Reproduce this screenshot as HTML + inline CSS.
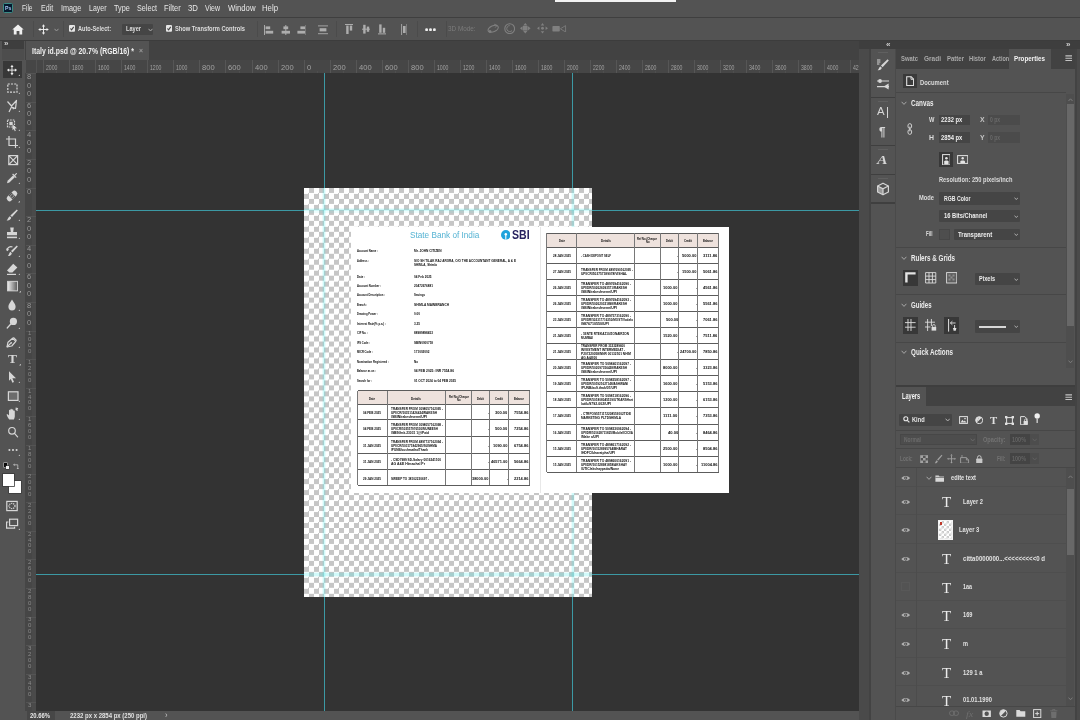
<!DOCTYPE html><html><head><meta charset="utf-8"><title>Photoshop</title><style>html,body{margin:0;padding:0;background:#535353;}body{width:1080px;height:720px;overflow:hidden;position:relative;font-family:"Liberation Sans", sans-serif;}#app{position:absolute;left:0;top:0;width:1080px;height:720px;overflow:hidden;will-change:transform;}.t{position:absolute;white-space:pre;line-height:1;transform-origin:0 50%;}</style></head><body><div id="app">
<div style="position:absolute;left:0px;top:0px;width:1080px;height:720px;background:#535353;"></div>
<div style="position:absolute;left:0px;top:17px;width:1080px;height:1px;background:#3f3f3f;"></div>
<div style="position:absolute;left:555px;top:0px;width:121px;height:2px;background:#f2f2f2;"></div>
<div style="position:absolute;left:0px;top:40px;width:1080px;height:1px;background:#3c3c3c;"></div>
<div style="position:absolute;left:25px;top:41px;width:835px;height:19px;background:#424242;"></div>
<div style="position:absolute;left:860px;top:41px;width:220px;height:679px;background:#4a4a4a;"></div>
<div style="position:absolute;left:860px;top:41px;width:220px;height:8px;background:#3e3e3e;"></div>
<div style="position:absolute;left:1075px;top:49px;width:1.6px;height:671px;background:#434343;"></div>
<div style="position:absolute;left:2.8px;top:2.8px;width:10.6px;height:9.8px;background:#061a2e;border:1.1px solid #3a8c86;border-radius:1.6px;box-sizing:border-box;"></div>
<span class="t" style="left:4.9px;top:6px;font-size:5.6px;font-weight:700;color:#a8c6f2;transform:translateY(0.01px) scale(0.9352,1.0);">Ps</span>
<span class="t" style="left:22px;top:4px;font-size:9px;font-weight:400;color:#e6e6e6;transform:translateY(0.11px) scale(0.7234,1.08);">File</span>
<span class="t" style="left:40.8px;top:4px;font-size:9px;font-weight:400;color:#e6e6e6;transform:translateY(0.11px) scale(0.7863,1.08);">Edit</span>
<span class="t" style="left:60.8px;top:4px;font-size:9px;font-weight:400;color:#e6e6e6;transform:translateY(0.11px) scale(0.8075,1.08);">Image</span>
<span class="t" style="left:89px;top:4px;font-size:9px;font-weight:400;color:#e6e6e6;transform:translateY(0.11px) scale(0.7772,1.08);">Layer</span>
<span class="t" style="left:113.8px;top:4px;font-size:9px;font-weight:400;color:#e6e6e6;transform:translateY(0.11px) scale(0.8045,1.08);">Type</span>
<span class="t" style="left:137px;top:4px;font-size:9px;font-weight:400;color:#e6e6e6;transform:translateY(0.11px) scale(0.7995,1.08);">Select</span>
<span class="t" style="left:163.8px;top:4px;font-size:9px;font-weight:400;color:#e6e6e6;transform:translateY(0.11px) scale(0.8350,1.08);">Filter</span>
<span class="t" style="left:187.5px;top:4px;font-size:9px;font-weight:400;color:#e6e6e6;transform:translateY(0.11px) scale(0.8684,1.08);">3D</span>
<span class="t" style="left:205px;top:4px;font-size:9px;font-weight:400;color:#e6e6e6;transform:translateY(0.11px) scale(0.7748,1.08);">View</span>
<span class="t" style="left:227.5px;top:4px;font-size:9px;font-weight:400;color:#e6e6e6;transform:translateY(0.11px) scale(0.8590,1.08);">Window</span>
<span class="t" style="left:262px;top:4px;font-size:9px;font-weight:400;color:#e6e6e6;transform:translateY(0.11px) scale(0.8641,1.08);">Help</span>
<svg style="position:absolute;left:12px;top:23.5px;" width="12" height="11" viewBox="0 0 12 11"><path d="M6 0.5 L0.3 5.6 H1.8 V10.5 H4.6 V7 H7.4 V10.5 H10.2 V5.6 H11.7 Z" fill="#f0f0f0"/></svg>
<div style="position:absolute;left:33px;top:21px;width:1px;height:16px;background:#4b4b4b;"></div>
<svg style="position:absolute;left:38px;top:23.5px;" width="11" height="11" viewBox="0 0 11 11"><g stroke="#eee" stroke-width="0.95" fill="#eee"><path d="M5.5 1.6V9.4M1.6 5.5H9.4" fill="none"/><path d="M5.5 0.2L7.1 2.5H3.9Z M5.5 10.8L7.1 8.5H3.9Z M0.2 5.5L2.5 3.9V7.1Z M10.8 5.5L8.5 3.9V7.1Z" stroke="none"/></g></svg>
<svg style="position:absolute;left:54px;top:27.5px;" width="5" height="4" viewBox="0 0 5 4"><path d="M0.5 0.8L2.5 3L4.5 0.8" stroke="#999" stroke-width="1" fill="none"/></svg>
<div style="position:absolute;left:63px;top:21px;width:1px;height:16px;background:#4b4b4b;"></div>
<svg style="position:absolute;left:69.1px;top:25.4px;" width="6" height="6.8" viewBox="0 0 6 6.8"><rect x="0" y="0" width="6" height="6.8" rx="1" fill="#e6e6e6"/><path d="M1.4 3.5L2.6 4.9L4.7 1.9" stroke="#444" stroke-width="1.1" fill="none"/></svg>
<span class="t" style="left:78px;top:24px;font-size:7.5px;font-weight:700;color:#dedede;transform:translateY(0.93px) scale(0.7471,1.08);">Auto-Select:</span>
<div style="position:absolute;left:122px;top:24px;width:31px;height:11px;background:#454545;border-radius:1px;"></div>
<span class="t" style="left:126.3px;top:25px;font-size:7.5px;font-weight:700;color:#dedede;transform:translateY(0.03px) scale(0.7494,1.08);">Layer</span>
<svg style="position:absolute;left:147.5px;top:27.5px;" width="5" height="4" viewBox="0 0 5 4"><path d="M0.5 0.8L2.5 3L4.5 0.8" stroke="#aaa" stroke-width="1" fill="none"/></svg>
<svg style="position:absolute;left:166.1px;top:25.4px;" width="6" height="6.8" viewBox="0 0 6 6.8"><rect x="0" y="0" width="6" height="6.8" rx="1" fill="#e6e6e6"/><path d="M1.4 3.5L2.6 4.9L4.7 1.9" stroke="#444" stroke-width="1.1" fill="none"/></svg>
<span class="t" style="left:175px;top:24px;font-size:7.5px;font-weight:700;color:#dedede;transform:translateY(0.93px) scale(0.7635,1.08);">Show Transform Controls</span>
<div style="position:absolute;left:257px;top:21px;width:1px;height:16px;background:#4b4b4b;"></div>
<div style="position:absolute;left:26px;top:41px;width:123px;height:19px;background:#535353;"></div>
<span class="t" style="left:32px;top:47px;font-size:8px;font-weight:700;color:#f0f0f0;transform:translateY(0.39px) scale(0.8608,1.08);">Italy id.psd @ 20.7% (RGB/16) *</span>
<span class="t" style="left:139px;top:46px;font-size:7px;font-weight:700;color:#9a9a9a;transform:translateY(0.83px) scale(0.9771,1.08);">×</span>
<div style="position:absolute;left:0px;top:41px;width:25px;height:679px;background:#535353;"></div>
<div style="position:absolute;left:2px;top:41px;width:22px;height:8px;background:#3e3e3e;"></div>
<span class="t" style="left:4px;top:40px;font-size:7px;font-weight:700;color:#cfcfcf;transform:translateY(0.13px) scale(1.1520,1.08);">»</span>
<div style="position:absolute;left:2px;top:49px;width:22px;height:11px;background:#4d4d4d;"></div>
<div style="position:absolute;left:2.6px;top:61.4px;width:19.6px;height:16.2px;background:#383838;"></div>
<div style="position:absolute;left:26px;top:59.6px;width:834px;height:13.2px;background:#464646;"></div>
<div style="position:absolute;left:25.4px;top:73px;width:10.8px;height:638px;background:#464646;"></div>
<div style="position:absolute;left:31.5px;top:73px;width:4.7px;height:638px;background:#4a4a4a;"></div>
<div style="position:absolute;left:36px;top:73px;width:823px;height:638px;background:#333333;"></div>
<div style="position:absolute;left:25px;top:711px;width:835px;height:9px;background:#535353;"></div>
<div style="position:absolute;left:27px;top:711px;width:28px;height:9px;background:#474747;"></div>
<span class="t" style="left:30px;top:711px;font-size:7px;font-weight:700;color:#e8e8e8;transform:translateY(0.53px) scale(0.8421,1.08);">20.66%</span>
<span class="t" style="left:70px;top:711px;font-size:7px;font-weight:700;color:#e0e0e0;transform:translateY(0.53px) scale(0.8566,1.08);">2232 px x 2854 px (250 ppi)</span>
<span class="t" style="left:165px;top:711px;font-size:8px;font-weight:400;color:#ccc;transform:translateY(0.71px) scale(0.9357,1.08);">›</span>
<div style="position:absolute;left:43px;top:60px;width:1px;height:13px;background:#565656;"></div>
<span class="t" style="left:46px;top:64px;font-size:6.5px;font-weight:400;color:#a2a2a2;transform:translateY(0.82px) scale(0.7948,1.08);">2000</span>
<div style="position:absolute;left:69px;top:60px;width:1px;height:13px;background:#565656;"></div>
<span class="t" style="left:72px;top:64px;font-size:6.5px;font-weight:400;color:#a2a2a2;transform:translateY(0.82px) scale(0.7948,1.08);">1800</span>
<div style="position:absolute;left:95px;top:60px;width:1px;height:13px;background:#565656;"></div>
<span class="t" style="left:98px;top:64px;font-size:6.5px;font-weight:400;color:#a2a2a2;transform:translateY(0.82px) scale(0.7948,1.08);">1600</span>
<div style="position:absolute;left:121px;top:60px;width:1px;height:13px;background:#565656;"></div>
<span class="t" style="left:124px;top:64px;font-size:6.5px;font-weight:400;color:#a2a2a2;transform:translateY(0.82px) scale(0.7948,1.08);">1400</span>
<div style="position:absolute;left:147px;top:60px;width:1px;height:13px;background:#565656;"></div>
<span class="t" style="left:150px;top:64px;font-size:6.5px;font-weight:400;color:#a2a2a2;transform:translateY(0.82px) scale(0.7948,1.08);">1200</span>
<div style="position:absolute;left:173px;top:60px;width:1px;height:13px;background:#565656;"></div>
<span class="t" style="left:176px;top:64px;font-size:6.5px;font-weight:400;color:#a2a2a2;transform:translateY(0.82px) scale(0.7948,1.08);">1000</span>
<div style="position:absolute;left:199px;top:60px;width:1px;height:13px;background:#565656;"></div>
<span class="t" style="left:202px;top:63px;font-size:7.5px;font-weight:400;color:#a2a2a2;transform:translateY(0.82px) scale(1.0067,1.08);">800</span>
<div style="position:absolute;left:225px;top:60px;width:1px;height:13px;background:#565656;"></div>
<span class="t" style="left:228px;top:63px;font-size:7.5px;font-weight:400;color:#a2a2a2;transform:translateY(0.82px) scale(1.0067,1.08);">600</span>
<div style="position:absolute;left:252px;top:60px;width:1px;height:13px;background:#565656;"></div>
<span class="t" style="left:255px;top:63px;font-size:7.5px;font-weight:400;color:#a2a2a2;transform:translateY(0.82px) scale(1.0067,1.08);">400</span>
<div style="position:absolute;left:278px;top:60px;width:1px;height:13px;background:#565656;"></div>
<span class="t" style="left:281px;top:63px;font-size:7.5px;font-weight:400;color:#a2a2a2;transform:translateY(0.82px) scale(1.0067,1.08);">200</span>
<div style="position:absolute;left:304px;top:60px;width:1px;height:13px;background:#565656;"></div>
<span class="t" style="left:307px;top:63px;font-size:7.5px;font-weight:400;color:#a2a2a2;transform:translateY(0.82px) scale(1.0067,1.08);">0</span>
<div style="position:absolute;left:330px;top:60px;width:1px;height:13px;background:#565656;"></div>
<span class="t" style="left:333px;top:63px;font-size:7.5px;font-weight:400;color:#a2a2a2;transform:translateY(0.82px) scale(1.0067,1.08);">200</span>
<div style="position:absolute;left:356px;top:60px;width:1px;height:13px;background:#565656;"></div>
<span class="t" style="left:359px;top:63px;font-size:7.5px;font-weight:400;color:#a2a2a2;transform:translateY(0.82px) scale(1.0067,1.08);">400</span>
<div style="position:absolute;left:382px;top:60px;width:1px;height:13px;background:#565656;"></div>
<span class="t" style="left:385px;top:63px;font-size:7.5px;font-weight:400;color:#a2a2a2;transform:translateY(0.82px) scale(1.0067,1.08);">600</span>
<div style="position:absolute;left:408px;top:60px;width:1px;height:13px;background:#565656;"></div>
<span class="t" style="left:411px;top:63px;font-size:7.5px;font-weight:400;color:#a2a2a2;transform:translateY(0.82px) scale(1.0067,1.08);">800</span>
<div style="position:absolute;left:434px;top:60px;width:1px;height:13px;background:#565656;"></div>
<span class="t" style="left:437px;top:64px;font-size:6.5px;font-weight:400;color:#a2a2a2;transform:translateY(0.82px) scale(0.7948,1.08);">1000</span>
<div style="position:absolute;left:460px;top:60px;width:1px;height:13px;background:#565656;"></div>
<span class="t" style="left:463px;top:64px;font-size:6.5px;font-weight:400;color:#a2a2a2;transform:translateY(0.82px) scale(0.7948,1.08);">1200</span>
<div style="position:absolute;left:486px;top:60px;width:1px;height:13px;background:#565656;"></div>
<span class="t" style="left:489px;top:64px;font-size:6.5px;font-weight:400;color:#a2a2a2;transform:translateY(0.82px) scale(0.7948,1.08);">1400</span>
<div style="position:absolute;left:512px;top:60px;width:1px;height:13px;background:#565656;"></div>
<span class="t" style="left:515px;top:64px;font-size:6.5px;font-weight:400;color:#a2a2a2;transform:translateY(0.82px) scale(0.7948,1.08);">1600</span>
<div style="position:absolute;left:538px;top:60px;width:1px;height:13px;background:#565656;"></div>
<span class="t" style="left:541px;top:64px;font-size:6.5px;font-weight:400;color:#a2a2a2;transform:translateY(0.82px) scale(0.7948,1.08);">1800</span>
<div style="position:absolute;left:564px;top:60px;width:1px;height:13px;background:#565656;"></div>
<span class="t" style="left:567px;top:64px;font-size:6.5px;font-weight:400;color:#a2a2a2;transform:translateY(0.82px) scale(0.7948,1.08);">2000</span>
<div style="position:absolute;left:590px;top:60px;width:1px;height:13px;background:#565656;"></div>
<span class="t" style="left:593px;top:64px;font-size:6.5px;font-weight:400;color:#a2a2a2;transform:translateY(0.82px) scale(0.7948,1.08);">2200</span>
<div style="position:absolute;left:616px;top:60px;width:1px;height:13px;background:#565656;"></div>
<span class="t" style="left:619px;top:64px;font-size:6.5px;font-weight:400;color:#a2a2a2;transform:translateY(0.82px) scale(0.7948,1.08);">2400</span>
<div style="position:absolute;left:642px;top:60px;width:1px;height:13px;background:#565656;"></div>
<span class="t" style="left:645px;top:64px;font-size:6.5px;font-weight:400;color:#a2a2a2;transform:translateY(0.82px) scale(0.7948,1.08);">2600</span>
<div style="position:absolute;left:668px;top:60px;width:1px;height:13px;background:#565656;"></div>
<span class="t" style="left:671px;top:64px;font-size:6.5px;font-weight:400;color:#a2a2a2;transform:translateY(0.82px) scale(0.7948,1.08);">2800</span>
<div style="position:absolute;left:694px;top:60px;width:1px;height:13px;background:#565656;"></div>
<span class="t" style="left:697px;top:64px;font-size:6.5px;font-weight:400;color:#a2a2a2;transform:translateY(0.82px) scale(0.7948,1.08);">3000</span>
<div style="position:absolute;left:720px;top:60px;width:1px;height:13px;background:#565656;"></div>
<span class="t" style="left:723px;top:64px;font-size:6.5px;font-weight:400;color:#a2a2a2;transform:translateY(0.82px) scale(0.7948,1.08);">3200</span>
<div style="position:absolute;left:746px;top:60px;width:1px;height:13px;background:#565656;"></div>
<span class="t" style="left:749px;top:64px;font-size:6.5px;font-weight:400;color:#a2a2a2;transform:translateY(0.82px) scale(0.7948,1.08);">3400</span>
<div style="position:absolute;left:772px;top:60px;width:1px;height:13px;background:#565656;"></div>
<span class="t" style="left:775px;top:64px;font-size:6.5px;font-weight:400;color:#a2a2a2;transform:translateY(0.82px) scale(0.7948,1.08);">3600</span>
<div style="position:absolute;left:798px;top:60px;width:1px;height:13px;background:#565656;"></div>
<span class="t" style="left:801px;top:64px;font-size:6.5px;font-weight:400;color:#a2a2a2;transform:translateY(0.82px) scale(0.7948,1.08);">3800</span>
<div style="position:absolute;left:824px;top:60px;width:1px;height:13px;background:#565656;"></div>
<span class="t" style="left:827px;top:64px;font-size:6.5px;font-weight:400;color:#a2a2a2;transform:translateY(0.82px) scale(0.7948,1.08);">4000</span>
<div style="position:absolute;left:850px;top:60px;width:1px;height:13px;background:#565656;"></div>
<span class="t" style="left:853px;top:64px;font-size:6.5px;font-weight:400;color:#a2a2a2;transform:translateY(0.82px) scale(0.7948,1.08);">4200</span>
<div style="position:absolute;left:56px;top:71px;width:1px;height:2px;background:#4e4e4e;"></div>
<div style="position:absolute;left:82px;top:71px;width:1px;height:2px;background:#4e4e4e;"></div>
<div style="position:absolute;left:108px;top:71px;width:1px;height:2px;background:#4e4e4e;"></div>
<div style="position:absolute;left:134px;top:71px;width:1px;height:2px;background:#4e4e4e;"></div>
<div style="position:absolute;left:160px;top:71px;width:1px;height:2px;background:#4e4e4e;"></div>
<div style="position:absolute;left:186px;top:71px;width:1px;height:2px;background:#4e4e4e;"></div>
<div style="position:absolute;left:212px;top:71px;width:1px;height:2px;background:#4e4e4e;"></div>
<div style="position:absolute;left:239px;top:71px;width:1px;height:2px;background:#4e4e4e;"></div>
<div style="position:absolute;left:265px;top:71px;width:1px;height:2px;background:#4e4e4e;"></div>
<div style="position:absolute;left:291px;top:71px;width:1px;height:2px;background:#4e4e4e;"></div>
<div style="position:absolute;left:317px;top:71px;width:1px;height:2px;background:#4e4e4e;"></div>
<div style="position:absolute;left:343px;top:71px;width:1px;height:2px;background:#4e4e4e;"></div>
<div style="position:absolute;left:369px;top:71px;width:1px;height:2px;background:#4e4e4e;"></div>
<div style="position:absolute;left:395px;top:71px;width:1px;height:2px;background:#4e4e4e;"></div>
<div style="position:absolute;left:421px;top:71px;width:1px;height:2px;background:#4e4e4e;"></div>
<div style="position:absolute;left:447px;top:71px;width:1px;height:2px;background:#4e4e4e;"></div>
<div style="position:absolute;left:473px;top:71px;width:1px;height:2px;background:#4e4e4e;"></div>
<div style="position:absolute;left:499px;top:71px;width:1px;height:2px;background:#4e4e4e;"></div>
<div style="position:absolute;left:525px;top:71px;width:1px;height:2px;background:#4e4e4e;"></div>
<div style="position:absolute;left:551px;top:71px;width:1px;height:2px;background:#4e4e4e;"></div>
<div style="position:absolute;left:577px;top:71px;width:1px;height:2px;background:#4e4e4e;"></div>
<div style="position:absolute;left:603px;top:71px;width:1px;height:2px;background:#4e4e4e;"></div>
<div style="position:absolute;left:629px;top:71px;width:1px;height:2px;background:#4e4e4e;"></div>
<div style="position:absolute;left:655px;top:71px;width:1px;height:2px;background:#4e4e4e;"></div>
<div style="position:absolute;left:681px;top:71px;width:1px;height:2px;background:#4e4e4e;"></div>
<div style="position:absolute;left:707px;top:71px;width:1px;height:2px;background:#4e4e4e;"></div>
<div style="position:absolute;left:733px;top:71px;width:1px;height:2px;background:#4e4e4e;"></div>
<div style="position:absolute;left:759px;top:71px;width:1px;height:2px;background:#4e4e4e;"></div>
<div style="position:absolute;left:785px;top:71px;width:1px;height:2px;background:#4e4e4e;"></div>
<div style="position:absolute;left:811px;top:71px;width:1px;height:2px;background:#4e4e4e;"></div>
<div style="position:absolute;left:837px;top:71px;width:1px;height:2px;background:#4e4e4e;"></div>
<div style="position:absolute;left:26px;top:73px;width:10px;height:1px;background:#545454;"></div>
<span class="t" style="left:27.3px;top:73px;font-size:7.5px;font-weight:400;color:#989898;transform:translateY(0.12px) scale(1.0067,1.08);">8</span>
<span class="t" style="left:27.3px;top:81px;font-size:7.5px;font-weight:400;color:#989898;transform:translateY(0.45px) scale(1.0067,1.08);">0</span>
<span class="t" style="left:27.3px;top:89px;font-size:7.5px;font-weight:400;color:#989898;transform:translateY(0.78px) scale(1.0067,1.08);">0</span>
<div style="position:absolute;left:26px;top:102px;width:10px;height:1px;background:#545454;"></div>
<span class="t" style="left:27.3px;top:101px;font-size:7.5px;font-weight:400;color:#989898;transform:translateY(0.72px) scale(1.0067,1.08);">6</span>
<span class="t" style="left:27.3px;top:110px;font-size:7.5px;font-weight:400;color:#989898;transform:translateY(0.05px) scale(1.0067,1.08);">0</span>
<span class="t" style="left:27.3px;top:118px;font-size:7.5px;font-weight:400;color:#989898;transform:translateY(0.38px) scale(1.0067,1.08);">0</span>
<div style="position:absolute;left:26px;top:130px;width:10px;height:1px;background:#545454;"></div>
<span class="t" style="left:27.3px;top:130px;font-size:7.5px;font-weight:400;color:#989898;transform:translateY(0.32px) scale(1.0067,1.08);">4</span>
<span class="t" style="left:27.3px;top:138px;font-size:7.5px;font-weight:400;color:#989898;transform:translateY(0.65px) scale(1.0067,1.08);">0</span>
<span class="t" style="left:27.3px;top:146px;font-size:7.5px;font-weight:400;color:#989898;transform:translateY(0.98px) scale(1.0067,1.08);">0</span>
<div style="position:absolute;left:26px;top:159px;width:10px;height:1px;background:#545454;"></div>
<span class="t" style="left:27.3px;top:158px;font-size:7.5px;font-weight:400;color:#989898;transform:translateY(0.92px) scale(1.0067,1.08);">2</span>
<span class="t" style="left:27.3px;top:167px;font-size:7.5px;font-weight:400;color:#989898;transform:translateY(0.25px) scale(1.0067,1.08);">0</span>
<span class="t" style="left:27.3px;top:175px;font-size:7.5px;font-weight:400;color:#989898;transform:translateY(0.58px) scale(1.0067,1.08);">0</span>
<div style="position:absolute;left:26px;top:188px;width:10px;height:1px;background:#545454;"></div>
<span class="t" style="left:27.3px;top:187px;font-size:7.5px;font-weight:400;color:#989898;transform:translateY(0.52px) scale(1.0067,1.08);">0</span>
<div style="position:absolute;left:26px;top:216px;width:10px;height:1px;background:#545454;"></div>
<span class="t" style="left:27.3px;top:216px;font-size:7.5px;font-weight:400;color:#989898;transform:translateY(0.12px) scale(1.0067,1.08);">2</span>
<span class="t" style="left:27.3px;top:224px;font-size:7.5px;font-weight:400;color:#989898;transform:translateY(0.45px) scale(1.0067,1.08);">0</span>
<span class="t" style="left:27.3px;top:232px;font-size:7.5px;font-weight:400;color:#989898;transform:translateY(0.78px) scale(1.0067,1.08);">0</span>
<div style="position:absolute;left:26px;top:245px;width:10px;height:1px;background:#545454;"></div>
<span class="t" style="left:27.3px;top:244px;font-size:7.5px;font-weight:400;color:#989898;transform:translateY(0.72px) scale(1.0067,1.08);">4</span>
<span class="t" style="left:27.3px;top:253px;font-size:7.5px;font-weight:400;color:#989898;transform:translateY(0.05px) scale(1.0067,1.08);">0</span>
<span class="t" style="left:27.3px;top:261px;font-size:7.5px;font-weight:400;color:#989898;transform:translateY(0.38px) scale(1.0067,1.08);">0</span>
<div style="position:absolute;left:26px;top:273px;width:10px;height:1px;background:#545454;"></div>
<span class="t" style="left:27.3px;top:273px;font-size:7.5px;font-weight:400;color:#989898;transform:translateY(0.32px) scale(1.0067,1.08);">6</span>
<span class="t" style="left:27.3px;top:281px;font-size:7.5px;font-weight:400;color:#989898;transform:translateY(0.65px) scale(1.0067,1.08);">0</span>
<span class="t" style="left:27.3px;top:289px;font-size:7.5px;font-weight:400;color:#989898;transform:translateY(0.98px) scale(1.0067,1.08);">0</span>
<div style="position:absolute;left:26px;top:302px;width:10px;height:1px;background:#545454;"></div>
<span class="t" style="left:27.3px;top:301px;font-size:7.5px;font-weight:400;color:#989898;transform:translateY(0.92px) scale(1.0067,1.08);">8</span>
<span class="t" style="left:27.3px;top:310px;font-size:7.5px;font-weight:400;color:#989898;transform:translateY(0.25px) scale(1.0067,1.08);">0</span>
<span class="t" style="left:27.3px;top:318px;font-size:7.5px;font-weight:400;color:#989898;transform:translateY(0.58px) scale(1.0067,1.08);">0</span>
<div style="position:absolute;left:26px;top:331px;width:10px;height:1px;background:#545454;"></div>
<span class="t" style="left:27.8px;top:331px;font-size:5.5px;font-weight:400;color:#8a8a8a;transform:translateY(0.35px) scale(1.1102,1.08);">1</span>
<span class="t" style="left:27.8px;top:337px;font-size:5.5px;font-weight:400;color:#8a8a8a;transform:translateY(0.25px) scale(1.1102,1.08);">0</span>
<span class="t" style="left:27.8px;top:343px;font-size:5.5px;font-weight:400;color:#8a8a8a;transform:translateY(0.15px) scale(1.1102,1.08);">0</span>
<span class="t" style="left:27.8px;top:349px;font-size:5.5px;font-weight:400;color:#8a8a8a;transform:translateY(0.05px) scale(1.1102,1.08);">0</span>
<div style="position:absolute;left:26px;top:359px;width:10px;height:1px;background:#545454;"></div>
<span class="t" style="left:27.8px;top:359px;font-size:5.5px;font-weight:400;color:#8a8a8a;transform:translateY(0.95px) scale(1.1102,1.08);">1</span>
<span class="t" style="left:27.8px;top:365px;font-size:5.5px;font-weight:400;color:#8a8a8a;transform:translateY(0.85px) scale(1.1102,1.08);">2</span>
<span class="t" style="left:27.8px;top:371px;font-size:5.5px;font-weight:400;color:#8a8a8a;transform:translateY(0.75px) scale(1.1102,1.08);">0</span>
<span class="t" style="left:27.8px;top:377px;font-size:5.5px;font-weight:400;color:#8a8a8a;transform:translateY(0.65px) scale(1.1102,1.08);">0</span>
<div style="position:absolute;left:26px;top:388px;width:10px;height:1px;background:#545454;"></div>
<span class="t" style="left:27.8px;top:388px;font-size:5.5px;font-weight:400;color:#8a8a8a;transform:translateY(0.55px) scale(1.1102,1.08);">1</span>
<span class="t" style="left:27.8px;top:394px;font-size:5.5px;font-weight:400;color:#8a8a8a;transform:translateY(0.45px) scale(1.1102,1.08);">4</span>
<span class="t" style="left:27.8px;top:400px;font-size:5.5px;font-weight:400;color:#8a8a8a;transform:translateY(0.35px) scale(1.1102,1.08);">0</span>
<span class="t" style="left:27.8px;top:406px;font-size:5.5px;font-weight:400;color:#8a8a8a;transform:translateY(0.25px) scale(1.1102,1.08);">0</span>
<div style="position:absolute;left:26px;top:416px;width:10px;height:1px;background:#545454;"></div>
<span class="t" style="left:27.8px;top:417px;font-size:5.5px;font-weight:400;color:#8a8a8a;transform:translateY(0.15px) scale(1.1102,1.08);">1</span>
<span class="t" style="left:27.8px;top:423px;font-size:5.5px;font-weight:400;color:#8a8a8a;transform:translateY(0.05px) scale(1.1102,1.08);">6</span>
<span class="t" style="left:27.8px;top:428px;font-size:5.5px;font-weight:400;color:#8a8a8a;transform:translateY(0.95px) scale(1.1102,1.08);">0</span>
<span class="t" style="left:27.8px;top:434px;font-size:5.5px;font-weight:400;color:#8a8a8a;transform:translateY(0.85px) scale(1.1102,1.08);">0</span>
<div style="position:absolute;left:26px;top:445px;width:10px;height:1px;background:#545454;"></div>
<span class="t" style="left:27.8px;top:445px;font-size:5.5px;font-weight:400;color:#8a8a8a;transform:translateY(0.75px) scale(1.1102,1.08);">1</span>
<span class="t" style="left:27.8px;top:451px;font-size:5.5px;font-weight:400;color:#8a8a8a;transform:translateY(0.65px) scale(1.1102,1.08);">8</span>
<span class="t" style="left:27.8px;top:457px;font-size:5.5px;font-weight:400;color:#8a8a8a;transform:translateY(0.55px) scale(1.1102,1.08);">0</span>
<span class="t" style="left:27.8px;top:463px;font-size:5.5px;font-weight:400;color:#8a8a8a;transform:translateY(0.45px) scale(1.1102,1.08);">0</span>
<div style="position:absolute;left:26px;top:474px;width:10px;height:1px;background:#545454;"></div>
<span class="t" style="left:27.8px;top:474px;font-size:5.5px;font-weight:400;color:#8a8a8a;transform:translateY(0.35px) scale(1.1102,1.08);">2</span>
<span class="t" style="left:27.8px;top:480px;font-size:5.5px;font-weight:400;color:#8a8a8a;transform:translateY(0.25px) scale(1.1102,1.08);">0</span>
<span class="t" style="left:27.8px;top:486px;font-size:5.5px;font-weight:400;color:#8a8a8a;transform:translateY(0.15px) scale(1.1102,1.08);">0</span>
<span class="t" style="left:27.8px;top:492px;font-size:5.5px;font-weight:400;color:#8a8a8a;transform:translateY(0.05px) scale(1.1102,1.08);">0</span>
<div style="position:absolute;left:26px;top:502px;width:10px;height:1px;background:#545454;"></div>
<span class="t" style="left:27.8px;top:502px;font-size:5.5px;font-weight:400;color:#8a8a8a;transform:translateY(0.95px) scale(1.1102,1.08);">2</span>
<span class="t" style="left:27.8px;top:508px;font-size:5.5px;font-weight:400;color:#8a8a8a;transform:translateY(0.85px) scale(1.1102,1.08);">2</span>
<span class="t" style="left:27.8px;top:514px;font-size:5.5px;font-weight:400;color:#8a8a8a;transform:translateY(0.75px) scale(1.1102,1.08);">0</span>
<span class="t" style="left:27.8px;top:520px;font-size:5.5px;font-weight:400;color:#8a8a8a;transform:translateY(0.65px) scale(1.1102,1.08);">0</span>
<div style="position:absolute;left:26px;top:531px;width:10px;height:1px;background:#545454;"></div>
<span class="t" style="left:27.8px;top:531px;font-size:5.5px;font-weight:400;color:#8a8a8a;transform:translateY(0.55px) scale(1.1102,1.08);">2</span>
<span class="t" style="left:27.8px;top:537px;font-size:5.5px;font-weight:400;color:#8a8a8a;transform:translateY(0.45px) scale(1.1102,1.08);">4</span>
<span class="t" style="left:27.8px;top:543px;font-size:5.5px;font-weight:400;color:#8a8a8a;transform:translateY(0.35px) scale(1.1102,1.08);">0</span>
<span class="t" style="left:27.8px;top:549px;font-size:5.5px;font-weight:400;color:#8a8a8a;transform:translateY(0.25px) scale(1.1102,1.08);">0</span>
<div style="position:absolute;left:26px;top:559px;width:10px;height:1px;background:#545454;"></div>
<span class="t" style="left:27.8px;top:560px;font-size:5.5px;font-weight:400;color:#8a8a8a;transform:translateY(0.15px) scale(1.1102,1.08);">2</span>
<span class="t" style="left:27.8px;top:566px;font-size:5.5px;font-weight:400;color:#8a8a8a;transform:translateY(0.05px) scale(1.1102,1.08);">6</span>
<span class="t" style="left:27.8px;top:571px;font-size:5.5px;font-weight:400;color:#8a8a8a;transform:translateY(0.95px) scale(1.1102,1.08);">0</span>
<span class="t" style="left:27.8px;top:577px;font-size:5.5px;font-weight:400;color:#8a8a8a;transform:translateY(0.85px) scale(1.1102,1.08);">0</span>
<div style="position:absolute;left:26px;top:588px;width:10px;height:1px;background:#545454;"></div>
<span class="t" style="left:27.8px;top:588px;font-size:5.5px;font-weight:400;color:#8a8a8a;transform:translateY(0.75px) scale(1.1102,1.08);">2</span>
<span class="t" style="left:27.8px;top:594px;font-size:5.5px;font-weight:400;color:#8a8a8a;transform:translateY(0.65px) scale(1.1102,1.08);">8</span>
<span class="t" style="left:27.8px;top:600px;font-size:5.5px;font-weight:400;color:#8a8a8a;transform:translateY(0.55px) scale(1.1102,1.08);">0</span>
<span class="t" style="left:27.8px;top:606px;font-size:5.5px;font-weight:400;color:#8a8a8a;transform:translateY(0.45px) scale(1.1102,1.08);">0</span>
<div style="position:absolute;left:26px;top:617px;width:10px;height:1px;background:#545454;"></div>
<span class="t" style="left:27.8px;top:617px;font-size:5.5px;font-weight:400;color:#8a8a8a;transform:translateY(0.35px) scale(1.1102,1.08);">3</span>
<span class="t" style="left:27.8px;top:623px;font-size:5.5px;font-weight:400;color:#8a8a8a;transform:translateY(0.25px) scale(1.1102,1.08);">0</span>
<span class="t" style="left:27.8px;top:629px;font-size:5.5px;font-weight:400;color:#8a8a8a;transform:translateY(0.15px) scale(1.1102,1.08);">0</span>
<span class="t" style="left:27.8px;top:635px;font-size:5.5px;font-weight:400;color:#8a8a8a;transform:translateY(0.05px) scale(1.1102,1.08);">0</span>
<div style="position:absolute;left:26px;top:645px;width:10px;height:1px;background:#545454;"></div>
<span class="t" style="left:27.8px;top:645px;font-size:5.5px;font-weight:400;color:#8a8a8a;transform:translateY(0.95px) scale(1.1102,1.08);">3</span>
<span class="t" style="left:27.8px;top:651px;font-size:5.5px;font-weight:400;color:#8a8a8a;transform:translateY(0.85px) scale(1.1102,1.08);">2</span>
<span class="t" style="left:27.8px;top:657px;font-size:5.5px;font-weight:400;color:#8a8a8a;transform:translateY(0.75px) scale(1.1102,1.08);">0</span>
<span class="t" style="left:27.8px;top:663px;font-size:5.5px;font-weight:400;color:#8a8a8a;transform:translateY(0.65px) scale(1.1102,1.08);">0</span>
<div style="position:absolute;left:26px;top:674px;width:10px;height:1px;background:#545454;"></div>
<span class="t" style="left:27.8px;top:674px;font-size:5.5px;font-weight:400;color:#8a8a8a;transform:translateY(0.55px) scale(1.1102,1.08);">3</span>
<span class="t" style="left:27.8px;top:680px;font-size:5.5px;font-weight:400;color:#8a8a8a;transform:translateY(0.45px) scale(1.1102,1.08);">4</span>
<span class="t" style="left:27.8px;top:686px;font-size:5.5px;font-weight:400;color:#8a8a8a;transform:translateY(0.35px) scale(1.1102,1.08);">0</span>
<span class="t" style="left:27.8px;top:692px;font-size:5.5px;font-weight:400;color:#8a8a8a;transform:translateY(0.25px) scale(1.1102,1.08);">0</span>
<div style="position:absolute;left:26px;top:702px;width:10px;height:1px;background:#545454;"></div>
<span class="t" style="left:27.8px;top:703px;font-size:5.5px;font-weight:400;color:#8a8a8a;transform:translateY(0.15px) scale(1.1102,1.08);">3</span>
<div style="position:absolute;left:26px;top:60px;width:10px;height:13px;background:#464646;"></div>
<div style="position:absolute;left:36px;top:60px;width:1px;height:13px;background:#525252;"></div>
<div style="position:absolute;left:323.7px;top:73px;width:1.2px;height:638px;background:rgba(64,192,208,0.72);"></div>
<div style="position:absolute;left:572.2px;top:73px;width:1.2px;height:638px;background:rgba(64,192,208,0.72);"></div>
<div style="position:absolute;left:36px;top:209.7px;width:824px;height:1.2px;background:rgba(64,192,208,0.72);"></div>
<div style="position:absolute;left:36px;top:573.9px;width:824px;height:1.2px;background:rgba(64,192,208,0.72);"></div>
<div style="position:absolute;left:303.8px;top:187.8px;width:288.6px;height:409.4px;overflow:hidden;background:#fff;"><div style="position:absolute;left:-10px;top:-10.98px;width:320px;height:440px;background:conic-gradient(#c6c6c6 25%,#fff 0 50%,#c6c6c6 0 75%,#fff 0);background-size:10px 10.98px;filter:blur(0.55px);"></div><div style="position:absolute;left:18.299999999999976px;top:0;width:4.4px;height:409.4px;background:rgba(60,235,235,0.09);"></div><div style="position:absolute;left:19.599999999999977px;top:0;width:1.8px;height:409.4px;background:rgba(60,235,235,0.16);"></div><div style="position:absolute;left:266.8px;top:0;width:4.4px;height:409.4px;background:rgba(60,235,235,0.09);"></div><div style="position:absolute;left:268.1px;top:0;width:1.8px;height:409.4px;background:rgba(60,235,235,0.16);"></div><div style="position:absolute;left:0;top:20.099999999999977px;width:288.6px;height:4.8px;background:rgba(60,235,235,0.09);"></div><div style="position:absolute;left:0;top:21.399999999999977px;width:288.6px;height:2.2px;background:rgba(60,235,235,0.16);"></div><div style="position:absolute;left:0;top:384.29999999999995px;width:288.6px;height:4.8px;background:rgba(60,235,235,0.09);"></div><div style="position:absolute;left:0;top:385.59999999999997px;width:288.6px;height:2.2px;background:rgba(60,235,235,0.16);"></div></div>
<div style="position:absolute;left:350.5px;top:227px;width:189.5px;height:265.6px;background:#ffffff;"></div>
<div style="position:absolute;left:540px;top:227.2px;width:189.2px;height:265.6px;background:#ffffff;"></div>
<div style="position:absolute;left:539.6px;top:227.2px;width:0.8px;height:265.4px;background:#e8e8e8;"></div>
<span class="t" style="left:410px;top:231px;font-size:8.2px;font-weight:400;color:#55b3d3;transform:translateY(0.51px) scale(1.0016,1.08);">State Bank of India</span>
<svg style="position:absolute;left:500.8px;top:230.4px;" width="9.6" height="9.8" viewBox="0 0 10 10"><circle cx="5" cy="5" r="5" fill="#1fa3dc"/><circle cx="5" cy="4.3" r="1.3" fill="#fff"/><rect x="4.45" y="4.5" width="1.1" height="5.5" fill="#fff"/></svg>
<span class="t" style="left:511.6px;top:230px;font-size:11.5px;font-weight:700;color:#27215f;transform:translateY(0.17px) scale(0.9180,1.08);">SBI</span>
<span class="t" style="left:357px;top:250px;font-size:3px;font-weight:700;color:#0c0c0c;transform:translateY(0.17px) scale(0.9193,1.08);">Account Name :</span>
<span class="t" style="left:414px;top:250px;font-size:3px;font-weight:700;color:#0c0c0c;transform:translateY(0.17px) scale(1.0571,1.08);">Mr. JOHN CITIZEN</span>
<span class="t" style="left:357px;top:260px;font-size:3px;font-weight:700;color:#0c0c0c;transform:translateY(0.07px) scale(0.8668,1.08);">Address :</span>
<span class="t" style="left:414px;top:260px;font-size:3px;font-weight:700;color:#0c0c0c;transform:translateY(0.07px) scale(1.0301,1.08);">S/O SH TILAK RAJ ARORA, O/O THE ACCOUNTANT GENERAL, A &amp; E</span>
<span class="t" style="left:414px;top:263px;font-size:3px;font-weight:700;color:#0c0c0c;transform:translateY(0.47px) scale(0.9993,1.08);">SHIMLA, Shimla</span>
<span class="t" style="left:357px;top:275px;font-size:3px;font-weight:700;color:#0c0c0c;transform:translateY(0.47px) scale(0.9588,1.08);">Date :</span>
<span class="t" style="left:414px;top:275px;font-size:3px;font-weight:700;color:#0c0c0c;transform:translateY(0.47px) scale(1.0343,1.08);">04 Feb 2025</span>
<span class="t" style="left:357px;top:284px;font-size:3px;font-weight:700;color:#0c0c0c;transform:translateY(0.67px) scale(0.9225,1.08);">Account Number :</span>
<span class="t" style="left:414px;top:284px;font-size:3px;font-weight:700;color:#0c0c0c;transform:translateY(0.67px) scale(1.0349,1.08);">20472676881</span>
<span class="t" style="left:357px;top:294px;font-size:3px;font-weight:700;color:#0c0c0c;transform:translateY(0.37px) scale(0.8982,1.08);">Account Description :</span>
<span class="t" style="left:414px;top:294px;font-size:3px;font-weight:700;color:#0c0c0c;transform:translateY(0.37px) scale(0.9552,1.08);">Savings</span>
<span class="t" style="left:357px;top:303px;font-size:3px;font-weight:700;color:#0c0c0c;transform:translateY(0.77px) scale(0.8216,1.08);">Branch :</span>
<span class="t" style="left:414px;top:303px;font-size:3px;font-weight:700;color:#0c0c0c;transform:translateY(0.77px) scale(1.0641,1.08);">SHIMLA MAINBRANCH</span>
<span class="t" style="left:357px;top:313px;font-size:3px;font-weight:700;color:#0c0c0c;transform:translateY(0.17px) scale(0.8930,1.08);">Drawing Power :</span>
<span class="t" style="left:414px;top:313px;font-size:3px;font-weight:700;color:#0c0c0c;transform:translateY(0.17px) scale(1.0267,1.08);">0.00</span>
<span class="t" style="left:357px;top:322px;font-size:3px;font-weight:700;color:#0c0c0c;transform:translateY(0.67px) scale(0.9450,1.08);">Interest Rate(% p.a.) :</span>
<span class="t" style="left:414px;top:322px;font-size:3px;font-weight:700;color:#0c0c0c;transform:translateY(0.67px) scale(1.0267,1.08);">3.25</span>
<span class="t" style="left:357px;top:332px;font-size:3px;font-weight:700;color:#0c0c0c;transform:translateY(0.07px) scale(0.8911,1.08);">CIF No. :</span>
<span class="t" style="left:414px;top:332px;font-size:3px;font-weight:700;color:#0c0c0c;transform:translateY(0.07px) scale(1.0349,1.08);">88989898453</span>
<span class="t" style="left:357px;top:341px;font-size:3px;font-weight:700;color:#0c0c0c;transform:translateY(0.77px) scale(0.8758,1.08);">IFS Code :</span>
<span class="t" style="left:414px;top:341px;font-size:3px;font-weight:700;color:#0c0c0c;transform:translateY(0.77px) scale(1.0075,1.08);">SBIN0000718</span>
<span class="t" style="left:357px;top:350px;font-size:3px;font-weight:700;color:#0c0c0c;transform:translateY(0.97px) scale(0.8967,1.08);">MICR Code :</span>
<span class="t" style="left:414px;top:350px;font-size:3px;font-weight:700;color:#0c0c0c;transform:translateY(0.97px) scale(1.0312,1.08);">171002002</span>
<span class="t" style="left:357px;top:360px;font-size:3px;font-weight:700;color:#0c0c0c;transform:translateY(0.47px) scale(0.9229,1.08);">Nomination Registered :</span>
<span class="t" style="left:414px;top:360px;font-size:3px;font-weight:700;color:#0c0c0c;transform:translateY(0.47px) scale(1.0000,1.08);">No</span>
<span class="t" style="left:357px;top:369px;font-size:3px;font-weight:700;color:#0c0c0c;transform:translateY(0.87px) scale(0.8630,1.08);">Balance as on :</span>
<span class="t" style="left:414px;top:369px;font-size:3px;font-weight:700;color:#0c0c0c;transform:translateY(0.87px) scale(1.1001,1.08);">04 FEB 2025: INR 7554.86</span>
<span class="t" style="left:357px;top:379px;font-size:3px;font-weight:700;color:#0c0c0c;transform:translateY(0.47px) scale(0.8997,1.08);">Search for :</span>
<span class="t" style="left:414px;top:379px;font-size:3px;font-weight:700;color:#0c0c0c;transform:translateY(0.47px) scale(1.0451,1.08);">01 OCT 2024 to 04 FEB 2025</span>
<div style="position:absolute;left:357.6px;top:390.7px;width:172.19999999999993px;height:13.300000000000011px;background:#eee2dd;"></div>
<div style="position:absolute;left:357.6px;top:390.3px;width:172.19999999999993px;height:0.8px;background:#5c5c5c;"></div>
<div style="position:absolute;left:357.6px;top:403.6px;width:172.19999999999993px;height:0.8px;background:#5c5c5c;"></div>
<div style="position:absolute;left:357.6px;top:419.40000000000003px;width:172.19999999999993px;height:0.8px;background:#5c5c5c;"></div>
<div style="position:absolute;left:357.6px;top:435.6px;width:172.19999999999993px;height:0.8px;background:#5c5c5c;"></div>
<div style="position:absolute;left:357.6px;top:452.6px;width:172.19999999999993px;height:0.8px;background:#5c5c5c;"></div>
<div style="position:absolute;left:357.6px;top:469.0px;width:172.19999999999993px;height:0.8px;background:#5c5c5c;"></div>
<div style="position:absolute;left:357.6px;top:484.8px;width:172.19999999999993px;height:0.8px;background:#5c5c5c;"></div>
<div style="position:absolute;left:357.25px;top:390.7px;width:0.7px;height:94.5px;background:#787878;"></div>
<div style="position:absolute;left:386.84999999999997px;top:390.7px;width:0.7px;height:94.5px;background:#787878;"></div>
<div style="position:absolute;left:445.15px;top:390.7px;width:0.7px;height:94.5px;background:#787878;"></div>
<div style="position:absolute;left:471.15px;top:390.7px;width:0.7px;height:94.5px;background:#787878;"></div>
<div style="position:absolute;left:489.25px;top:390.7px;width:0.7px;height:94.5px;background:#787878;"></div>
<div style="position:absolute;left:508.15px;top:390.7px;width:0.7px;height:94.5px;background:#787878;"></div>
<div style="position:absolute;left:529.4499999999999px;top:390.7px;width:0.7px;height:94.5px;background:#787878;"></div>
<span class="t" style="left:369.4px;top:397px;font-size:2.8px;font-weight:700;color:#0c0c0c;transform:translateY(0.52px) scale(0.9897,1.08);">Date</span>
<span class="t" style="left:411.35px;top:397px;font-size:2.8px;font-weight:700;color:#0c0c0c;transform:translateY(0.52px) scale(1.0903,1.08);">Details</span>
<span class="t" style="left:448.5px;top:396px;font-size:2.8px;font-weight:700;color:#0c0c0c;transform:translateY(0.02px) scale(0.9602,1.08);">Ref No./Cheque</span>
<span class="t" style="left:456.7px;top:399px;font-size:2.8px;font-weight:700;color:#0c0c0c;transform:translateY(0.12px) scale(0.9640,1.08);">No</span>
<span class="t" style="left:477.05px;top:397px;font-size:2.8px;font-weight:700;color:#0c0c0c;transform:translateY(0.52px) scale(1.0000,1.08);">Debit</span>
<span class="t" style="left:495.05px;top:397px;font-size:2.8px;font-weight:700;color:#0c0c0c;transform:translateY(0.52px) scale(0.9884,1.08);">Credit</span>
<span class="t" style="left:514.15px;top:397px;font-size:2.8px;font-weight:700;color:#0c0c0c;transform:translateY(0.52px) scale(0.9316,1.08);">Balance</span>
<span class="t" style="left:363.4px;top:412px;font-size:2.9px;font-weight:700;color:#0c0c0c;transform:translateY(0.08px) scale(1.0559,1.08);">04 FEB 2025</span>
<span class="t" style="left:391.2px;top:408px;font-size:2.9px;font-weight:700;color:#0c0c0c;transform:translateY(0.23px) scale(1.0715,1.08);">TRANSFER FROM 3098057162095 -</span>
<span class="t" style="left:391.2px;top:412px;font-size:2.9px;font-weight:700;color:#0c0c0c;transform:translateY(0.08px) scale(1.0760,1.08);">UPI/CR/503511426424/RAKESH</span>
<span class="t" style="left:391.2px;top:415px;font-size:2.9px;font-weight:700;color:#0c0c0c;transform:translateY(0.93px) scale(1.1852,1.08);">/SBIN/rakeshverm/UPI</span>
<span class="t" style="left:487.6px;top:412px;font-size:2.9px;font-weight:700;color:#0c0c0c;transform:translateY(0.08px) scale(1.0323,1.08);">-</span>
<span class="t" style="left:495.2px;top:412px;font-size:2.9px;font-weight:700;color:#0c0c0c;transform:translateY(0.08px) scale(1.3908,1.08);">300.00</span>
<span class="t" style="left:514.4499999999999px;top:412px;font-size:2.9px;font-weight:700;color:#0c0c0c;transform:translateY(0.08px) scale(1.3728,1.08);">7554.86</span>
<span class="t" style="left:363.4px;top:428px;font-size:2.9px;font-weight:700;color:#0c0c0c;transform:translateY(0.08px) scale(1.0559,1.08);">04 FEB 2025</span>
<span class="t" style="left:391.2px;top:424px;font-size:2.9px;font-weight:700;color:#0c0c0c;transform:translateY(0.23px) scale(1.0715,1.08);">TRANSFER FROM 3098057162098 -</span>
<span class="t" style="left:391.2px;top:428px;font-size:2.9px;font-weight:700;color:#0c0c0c;transform:translateY(0.08px) scale(1.0408,1.08);">UPI/CR/503557976530/MUNEESH</span>
<span class="t" style="left:391.2px;top:431px;font-size:2.9px;font-weight:700;color:#0c0c0c;transform:translateY(0.93px) scale(1.1285,1.08);">/SBIN/mk.23031 1@/Paid</span>
<span class="t" style="left:487.6px;top:428px;font-size:2.9px;font-weight:700;color:#0c0c0c;transform:translateY(0.08px) scale(1.0323,1.08);">-</span>
<span class="t" style="left:495.2px;top:428px;font-size:2.9px;font-weight:700;color:#0c0c0c;transform:translateY(0.08px) scale(1.3908,1.08);">500.00</span>
<span class="t" style="left:514.4499999999999px;top:428px;font-size:2.9px;font-weight:700;color:#0c0c0c;transform:translateY(0.08px) scale(1.3728,1.08);">7254.86</span>
<span class="t" style="left:363.4px;top:444px;font-size:2.9px;font-weight:700;color:#0c0c0c;transform:translateY(0.68px) scale(1.0559,1.08);">31 JAN 2025</span>
<span class="t" style="left:391.2px;top:440px;font-size:2.9px;font-weight:700;color:#0c0c0c;transform:translateY(0.83px) scale(1.0715,1.08);">TRANSFER FROM 4897737162094 -</span>
<span class="t" style="left:391.2px;top:444px;font-size:2.9px;font-weight:700;color:#0c0c0c;transform:translateY(0.68px) scale(1.0640,1.08);">UPI/CR/503171842965/SUSHMA</span>
<span class="t" style="left:391.2px;top:448px;font-size:2.9px;font-weight:700;color:#0c0c0c;transform:translateY(0.53px) scale(1.0764,1.08);">/PUNB/sushmatha/Thank</span>
<span class="t" style="left:487.6px;top:444px;font-size:2.9px;font-weight:700;color:#0c0c0c;transform:translateY(0.68px) scale(1.0323,1.08);">-</span>
<span class="t" style="left:493.15px;top:444px;font-size:2.9px;font-weight:700;color:#0c0c0c;transform:translateY(0.68px) scale(1.3728,1.08);">1090.00</span>
<span class="t" style="left:514.4499999999999px;top:444px;font-size:2.9px;font-weight:700;color:#0c0c0c;transform:translateY(0.68px) scale(1.3728,1.08);">6754.86</span>
<span class="t" style="left:363.4px;top:461px;font-size:2.9px;font-weight:700;color:#0c0c0c;transform:translateY(0.38px) scale(1.0559,1.08);">31 JAN 2025</span>
<span class="t" style="left:391.2px;top:459px;font-size:2.9px;font-weight:700;color:#0c0c0c;transform:translateY(0.45px) scale(1.0993,1.08);">- CSD7989 SD-Salary 0016241100</span>
<span class="t" style="left:391.2px;top:463px;font-size:2.9px;font-weight:700;color:#0c0c0c;transform:translateY(0.30px) scale(1.1865,1.08);">AG A&amp;E Himachal Pr</span>
<span class="t" style="left:487.6px;top:461px;font-size:2.9px;font-weight:700;color:#0c0c0c;transform:translateY(0.38px) scale(1.0323,1.08);">-</span>
<span class="t" style="left:491.1px;top:461px;font-size:2.9px;font-weight:700;color:#0c0c0c;transform:translateY(0.38px) scale(1.3596,1.08);">46571.00</span>
<span class="t" style="left:514.4499999999999px;top:461px;font-size:2.9px;font-weight:700;color:#0c0c0c;transform:translateY(0.38px) scale(1.3728,1.08);">5664.86</span>
<span class="t" style="left:363.4px;top:477px;font-size:2.9px;font-weight:700;color:#0c0c0c;transform:translateY(0.48px) scale(1.0559,1.08);">29 JAN 2025</span>
<span class="t" style="left:391.2px;top:477px;font-size:2.9px;font-weight:700;color:#0c0c0c;transform:translateY(0.48px) scale(1.0733,1.08);">SWEEP TO 38102230697 -</span>
<span class="t" style="left:472.20000000000005px;top:477px;font-size:2.9px;font-weight:700;color:#0c0c0c;transform:translateY(0.48px) scale(1.3596,1.08);">38000.00</span>
<span class="t" style="left:506.5px;top:477px;font-size:2.9px;font-weight:700;color:#0c0c0c;transform:translateY(0.48px) scale(1.0323,1.08);">-</span>
<span class="t" style="left:514.4499999999999px;top:477px;font-size:2.9px;font-weight:700;color:#0c0c0c;transform:translateY(0.48px) scale(1.3728,1.08);">2214.86</span>
<div style="position:absolute;left:546.5px;top:233px;width:172.29999999999995px;height:14px;background:#eee2dd;"></div>
<div style="position:absolute;left:546.5px;top:232.6px;width:172.29999999999995px;height:0.8px;background:#5c5c5c;"></div>
<div style="position:absolute;left:546.5px;top:246.6px;width:172.29999999999995px;height:0.8px;background:#5c5c5c;"></div>
<div style="position:absolute;left:546.5px;top:262.90000000000003px;width:172.29999999999995px;height:0.8px;background:#5c5c5c;"></div>
<div style="position:absolute;left:546.5px;top:279.0px;width:172.29999999999995px;height:0.8px;background:#5c5c5c;"></div>
<div style="position:absolute;left:546.5px;top:295.0px;width:172.29999999999995px;height:0.8px;background:#5c5c5c;"></div>
<div style="position:absolute;left:546.5px;top:310.90000000000003px;width:172.29999999999995px;height:0.8px;background:#5c5c5c;"></div>
<div style="position:absolute;left:546.5px;top:326.90000000000003px;width:172.29999999999995px;height:0.8px;background:#5c5c5c;"></div>
<div style="position:absolute;left:546.5px;top:342.90000000000003px;width:172.29999999999995px;height:0.8px;background:#5c5c5c;"></div>
<div style="position:absolute;left:546.5px;top:359.1px;width:172.29999999999995px;height:0.8px;background:#5c5c5c;"></div>
<div style="position:absolute;left:546.5px;top:375.0px;width:172.29999999999995px;height:0.8px;background:#5c5c5c;"></div>
<div style="position:absolute;left:546.5px;top:390.90000000000003px;width:172.29999999999995px;height:0.8px;background:#5c5c5c;"></div>
<div style="position:absolute;left:546.5px;top:407.20000000000005px;width:172.29999999999995px;height:0.8px;background:#5c5c5c;"></div>
<div style="position:absolute;left:546.5px;top:423.6px;width:172.29999999999995px;height:0.8px;background:#5c5c5c;"></div>
<div style="position:absolute;left:546.5px;top:439.8px;width:172.29999999999995px;height:0.8px;background:#5c5c5c;"></div>
<div style="position:absolute;left:546.5px;top:455.90000000000003px;width:172.29999999999995px;height:0.8px;background:#5c5c5c;"></div>
<div style="position:absolute;left:546.5px;top:471.90000000000003px;width:172.29999999999995px;height:0.8px;background:#5c5c5c;"></div>
<div style="position:absolute;left:546.15px;top:233px;width:0.7px;height:239.3px;background:#787878;"></div>
<div style="position:absolute;left:576.35px;top:233px;width:0.7px;height:239.3px;background:#787878;"></div>
<div style="position:absolute;left:634.25px;top:233px;width:0.7px;height:239.3px;background:#787878;"></div>
<div style="position:absolute;left:659.65px;top:233px;width:0.7px;height:239.3px;background:#787878;"></div>
<div style="position:absolute;left:678.4499999999999px;top:233px;width:0.7px;height:239.3px;background:#787878;"></div>
<div style="position:absolute;left:697.15px;top:233px;width:0.7px;height:239.3px;background:#787878;"></div>
<div style="position:absolute;left:718.4499999999999px;top:233px;width:0.7px;height:239.3px;background:#787878;"></div>
<span class="t" style="left:558.6px;top:239px;font-size:2.8px;font-weight:700;color:#0c0c0c;transform:translateY(0.57px) scale(0.9897,1.08);">Date</span>
<span class="t" style="left:600.6500000000001px;top:239px;font-size:2.8px;font-weight:700;color:#0c0c0c;transform:translateY(0.57px) scale(1.0903,1.08);">Details</span>
<span class="t" style="left:637.3px;top:238px;font-size:2.8px;font-weight:700;color:#0c0c0c;transform:translateY(0.07px) scale(0.9602,1.08);">Ref No./Cheque</span>
<span class="t" style="left:645.5px;top:241px;font-size:2.8px;font-weight:700;color:#0c0c0c;transform:translateY(0.17px) scale(0.9640,1.08);">No</span>
<span class="t" style="left:665.9px;top:239px;font-size:2.8px;font-weight:700;color:#0c0c0c;transform:translateY(0.57px) scale(1.0000,1.08);">Debit</span>
<span class="t" style="left:684.15px;top:239px;font-size:2.8px;font-weight:700;color:#0c0c0c;transform:translateY(0.57px) scale(0.9884,1.08);">Credit</span>
<span class="t" style="left:703.15px;top:239px;font-size:2.8px;font-weight:700;color:#0c0c0c;transform:translateY(0.57px) scale(0.9316,1.08);">Balance</span>
<span class="t" style="left:552.6px;top:254px;font-size:2.9px;font-weight:700;color:#0c0c0c;transform:translateY(0.73px) scale(1.0559,1.08);">28 JAN 2025</span>
<span class="t" style="left:580.7px;top:254px;font-size:2.9px;font-weight:700;color:#0c0c0c;transform:translateY(0.73px) scale(0.9481,1.08);">- CASH DEPOSIT SELF</span>
<span class="t" style="left:676.8px;top:254px;font-size:2.9px;font-weight:700;color:#0c0c0c;transform:translateY(0.73px) scale(1.0323,1.08);">-</span>
<span class="t" style="left:682.15px;top:254px;font-size:2.9px;font-weight:700;color:#0c0c0c;transform:translateY(0.73px) scale(1.3728,1.08);">5000.00</span>
<span class="t" style="left:703.4499999999999px;top:254px;font-size:2.9px;font-weight:700;color:#0c0c0c;transform:translateY(0.73px) scale(1.4151,1.08);">3111.86</span>
<span class="t" style="left:552.6px;top:270px;font-size:2.9px;font-weight:700;color:#0c0c0c;transform:translateY(0.93px) scale(1.0559,1.08);">27 JAN 2025</span>
<span class="t" style="left:580.7px;top:269px;font-size:2.9px;font-weight:700;color:#0c0c0c;transform:translateY(0.00px) scale(1.0715,1.08);">TRANSFER FROM 4897690162095 -</span>
<span class="t" style="left:580.7px;top:272px;font-size:2.9px;font-weight:700;color:#0c0c0c;transform:translateY(0.85px) scale(1.1139,1.08);">UPI/CR/502757189078/VISHAL</span>
<span class="t" style="left:676.8px;top:270px;font-size:2.9px;font-weight:700;color:#0c0c0c;transform:translateY(0.93px) scale(1.0323,1.08);">-</span>
<span class="t" style="left:682.15px;top:270px;font-size:2.9px;font-weight:700;color:#0c0c0c;transform:translateY(0.93px) scale(1.3728,1.08);">1500.00</span>
<span class="t" style="left:703.4499999999999px;top:270px;font-size:2.9px;font-weight:700;color:#0c0c0c;transform:translateY(0.93px) scale(1.3728,1.08);">5061.86</span>
<span class="t" style="left:552.6px;top:286px;font-size:2.9px;font-weight:700;color:#0c0c0c;transform:translateY(0.98px) scale(1.0559,1.08);">26 JAN 2025</span>
<span class="t" style="left:580.7px;top:283px;font-size:2.9px;font-weight:700;color:#0c0c0c;transform:translateY(0.13px) scale(1.1368,1.08);">TRANSFER TO 4897694162090 -</span>
<span class="t" style="left:580.7px;top:286px;font-size:2.9px;font-weight:700;color:#0c0c0c;transform:translateY(0.98px) scale(1.0721,1.08);">UPI/DR/502626093571/RAKESH</span>
<span class="t" style="left:580.7px;top:290px;font-size:2.9px;font-weight:700;color:#0c0c0c;transform:translateY(0.83px) scale(1.1852,1.08);">/SBIN/rakeshverm/UPI</span>
<span class="t" style="left:663.4499999999999px;top:286px;font-size:2.9px;font-weight:700;color:#0c0c0c;transform:translateY(0.98px) scale(1.3728,1.08);">1000.00</span>
<span class="t" style="left:695.5px;top:286px;font-size:2.9px;font-weight:700;color:#0c0c0c;transform:translateY(0.98px) scale(1.0323,1.08);">-</span>
<span class="t" style="left:703.4499999999999px;top:286px;font-size:2.9px;font-weight:700;color:#0c0c0c;transform:translateY(0.98px) scale(1.3728,1.08);">4561.86</span>
<span class="t" style="left:552.6px;top:302px;font-size:2.9px;font-weight:700;color:#0c0c0c;transform:translateY(0.93px) scale(1.0559,1.08);">26 JAN 2025</span>
<span class="t" style="left:580.7px;top:299px;font-size:2.9px;font-weight:700;color:#0c0c0c;transform:translateY(0.08px) scale(1.1368,1.08);">TRANSFER TO 4897694162093 -</span>
<span class="t" style="left:580.7px;top:302px;font-size:2.9px;font-weight:700;color:#0c0c0c;transform:translateY(0.93px) scale(1.0721,1.08);">UPI/DR/502620321898/RAKESH</span>
<span class="t" style="left:580.7px;top:306px;font-size:2.9px;font-weight:700;color:#0c0c0c;transform:translateY(0.78px) scale(1.1852,1.08);">/SBIN/rakeshverm/UPI</span>
<span class="t" style="left:663.4499999999999px;top:302px;font-size:2.9px;font-weight:700;color:#0c0c0c;transform:translateY(0.93px) scale(1.3728,1.08);">1000.00</span>
<span class="t" style="left:695.5px;top:302px;font-size:2.9px;font-weight:700;color:#0c0c0c;transform:translateY(0.93px) scale(1.0323,1.08);">-</span>
<span class="t" style="left:703.4499999999999px;top:302px;font-size:2.9px;font-weight:700;color:#0c0c0c;transform:translateY(0.93px) scale(1.3728,1.08);">5561.86</span>
<span class="t" style="left:552.6px;top:318px;font-size:2.9px;font-weight:700;color:#0c0c0c;transform:translateY(0.88px) scale(1.0559,1.08);">23 JAN 2025</span>
<span class="t" style="left:580.7px;top:315px;font-size:2.9px;font-weight:700;color:#0c0c0c;transform:translateY(0.03px) scale(1.1368,1.08);">TRANSFER TO 4897573162090 -</span>
<span class="t" style="left:580.7px;top:318px;font-size:2.9px;font-weight:700;color:#0c0c0c;transform:translateY(0.88px) scale(1.0518,1.08);">UPI/DR/502317716350/MOST/Vodafo</span>
<span class="t" style="left:580.7px;top:322px;font-size:2.9px;font-weight:700;color:#0c0c0c;transform:translateY(0.73px) scale(1.2436,1.08);">/9876710550/UPI</span>
<span class="t" style="left:665.5px;top:318px;font-size:2.9px;font-weight:700;color:#0c0c0c;transform:translateY(0.88px) scale(1.3908,1.08);">500.00</span>
<span class="t" style="left:695.5px;top:318px;font-size:2.9px;font-weight:700;color:#0c0c0c;transform:translateY(0.88px) scale(1.0323,1.08);">-</span>
<span class="t" style="left:703.4499999999999px;top:318px;font-size:2.9px;font-weight:700;color:#0c0c0c;transform:translateY(0.88px) scale(1.3728,1.08);">7061.86</span>
<span class="t" style="left:552.6px;top:334px;font-size:2.9px;font-weight:700;color:#0c0c0c;transform:translateY(0.88px) scale(1.0559,1.08);">21 JAN 2025</span>
<span class="t" style="left:580.7px;top:332px;font-size:2.9px;font-weight:700;color:#0c0c0c;transform:translateY(0.95px) scale(1.0711,1.08);">- 1ENTE RTEKAZ10/ZONAIRZON</span>
<span class="t" style="left:580.7px;top:336px;font-size:2.9px;font-weight:700;color:#0c0c0c;transform:translateY(0.80px) scale(1.0092,1.08);">MUMBAI</span>
<span class="t" style="left:663.4499999999999px;top:334px;font-size:2.9px;font-weight:700;color:#0c0c0c;transform:translateY(0.88px) scale(1.3728,1.08);">1520.00</span>
<span class="t" style="left:695.5px;top:334px;font-size:2.9px;font-weight:700;color:#0c0c0c;transform:translateY(0.88px) scale(1.0323,1.08);">-</span>
<span class="t" style="left:703.4499999999999px;top:334px;font-size:2.9px;font-weight:700;color:#0c0c0c;transform:translateY(0.88px) scale(1.3936,1.08);">7511.86</span>
<span class="t" style="left:552.6px;top:350px;font-size:2.9px;font-weight:700;color:#0c0c0c;transform:translateY(0.98px) scale(1.0559,1.08);">21 JAN 2025</span>
<span class="t" style="left:580.7px;top:345px;font-size:2.9px;font-weight:700;color:#0c0c0c;transform:translateY(0.20px) scale(1.0492,1.08);">TRANSFER FROM 3323289600</span>
<span class="t" style="left:580.7px;top:349px;font-size:2.9px;font-weight:700;color:#0c0c0c;transform:translateY(0.05px) scale(1.0798,1.08);">INVESTMENT INTERMEDIAT -</span>
<span class="t" style="left:580.7px;top:352px;font-size:2.9px;font-weight:700;color:#0c0c0c;transform:translateY(0.90px) scale(1.1031,1.08);">P207220058/NNR 00132501 NHIM</span>
<span class="t" style="left:580.7px;top:356px;font-size:2.9px;font-weight:700;color:#0c0c0c;transform:translateY(0.75px) scale(1.1143,1.08);">AG A&amp;E00</span>
<span class="t" style="left:676.8px;top:350px;font-size:2.9px;font-weight:700;color:#0c0c0c;transform:translateY(0.98px) scale(1.0323,1.08);">-</span>
<span class="t" style="left:680.1px;top:350px;font-size:2.9px;font-weight:700;color:#0c0c0c;transform:translateY(0.98px) scale(1.3596,1.08);">24700.00</span>
<span class="t" style="left:703.4499999999999px;top:350px;font-size:2.9px;font-weight:700;color:#0c0c0c;transform:translateY(0.98px) scale(1.3728,1.08);">7850.86</span>
<span class="t" style="left:552.6px;top:367px;font-size:2.9px;font-weight:700;color:#0c0c0c;transform:translateY(0.03px) scale(1.0559,1.08);">20 JAN 2025</span>
<span class="t" style="left:580.7px;top:363px;font-size:2.9px;font-weight:700;color:#0c0c0c;transform:translateY(0.18px) scale(1.1412,1.08);">TRANSFER TO 5098401162097 -</span>
<span class="t" style="left:580.7px;top:367px;font-size:2.9px;font-weight:700;color:#0c0c0c;transform:translateY(0.03px) scale(1.0721,1.08);">UPI/DR/502097356428/RAKESH</span>
<span class="t" style="left:580.7px;top:370px;font-size:2.9px;font-weight:700;color:#0c0c0c;transform:translateY(0.88px) scale(1.1852,1.08);">/SBIN/rakeshverm/UPI</span>
<span class="t" style="left:663.4499999999999px;top:367px;font-size:2.9px;font-weight:700;color:#0c0c0c;transform:translateY(0.03px) scale(1.3728,1.08);">8000.00</span>
<span class="t" style="left:695.5px;top:367px;font-size:2.9px;font-weight:700;color:#0c0c0c;transform:translateY(0.03px) scale(1.0323,1.08);">-</span>
<span class="t" style="left:703.4499999999999px;top:367px;font-size:2.9px;font-weight:700;color:#0c0c0c;transform:translateY(0.03px) scale(1.3728,1.08);">3323.86</span>
<span class="t" style="left:552.6px;top:382px;font-size:2.9px;font-weight:700;color:#0c0c0c;transform:translateY(0.93px) scale(1.0559,1.08);">19 JAN 2025</span>
<span class="t" style="left:580.7px;top:379px;font-size:2.9px;font-weight:700;color:#0c0c0c;transform:translateY(0.08px) scale(1.1368,1.08);">TRANSFER TO 5098358162097 -</span>
<span class="t" style="left:580.7px;top:382px;font-size:2.9px;font-weight:700;color:#0c0c0c;transform:translateY(0.93px) scale(1.0595,1.08);">UPI/DR/501921627148/ASHWANI</span>
<span class="t" style="left:580.7px;top:386px;font-size:2.9px;font-weight:700;color:#0c0c0c;transform:translateY(0.78px) scale(1.1607,1.08);">/PUNB/ac9.thak/07/UPI</span>
<span class="t" style="left:663.4499999999999px;top:382px;font-size:2.9px;font-weight:700;color:#0c0c0c;transform:translateY(0.93px) scale(1.3728,1.08);">1600.00</span>
<span class="t" style="left:695.5px;top:382px;font-size:2.9px;font-weight:700;color:#0c0c0c;transform:translateY(0.93px) scale(1.0323,1.08);">-</span>
<span class="t" style="left:703.4499999999999px;top:382px;font-size:2.9px;font-weight:700;color:#0c0c0c;transform:translateY(0.93px) scale(1.3728,1.08);">5153.86</span>
<span class="t" style="left:552.6px;top:399px;font-size:2.9px;font-weight:700;color:#0c0c0c;transform:translateY(0.03px) scale(1.0559,1.08);">18 JAN 2025</span>
<span class="t" style="left:580.7px;top:395px;font-size:2.9px;font-weight:700;color:#0c0c0c;transform:translateY(0.18px) scale(1.1412,1.08);">TRANSFER TO 5098118162096 -</span>
<span class="t" style="left:580.7px;top:399px;font-size:2.9px;font-weight:700;color:#0c0c0c;transform:translateY(0.03px) scale(1.0715,1.08);">UPI/DR/501808045519/UTKARSHart</span>
<span class="t" style="left:580.7px;top:402px;font-size:2.9px;font-weight:700;color:#0c0c0c;transform:translateY(0.88px) scale(1.2121,1.08);">/utib/9792-002/UPI</span>
<span class="t" style="left:663.4499999999999px;top:399px;font-size:2.9px;font-weight:700;color:#0c0c0c;transform:translateY(0.03px) scale(1.3728,1.08);">1200.00</span>
<span class="t" style="left:695.5px;top:399px;font-size:2.9px;font-weight:700;color:#0c0c0c;transform:translateY(0.03px) scale(1.0323,1.08);">-</span>
<span class="t" style="left:703.4499999999999px;top:399px;font-size:2.9px;font-weight:700;color:#0c0c0c;transform:translateY(0.03px) scale(1.3728,1.08);">6153.86</span>
<span class="t" style="left:552.6px;top:415px;font-size:2.9px;font-weight:700;color:#0c0c0c;transform:translateY(0.38px) scale(1.0559,1.08);">17 JAN 2025</span>
<span class="t" style="left:580.7px;top:413px;font-size:2.9px;font-weight:700;color:#0c0c0c;transform:translateY(0.45px) scale(1.0877,1.08);">- CTRPOS5571172208559102TIDE</span>
<span class="t" style="left:580.7px;top:417px;font-size:2.9px;font-weight:700;color:#0c0c0c;transform:translateY(0.30px) scale(1.0894,1.08);">MARKETING PLTDSHIMLA</span>
<span class="t" style="left:663.4499999999999px;top:415px;font-size:2.9px;font-weight:700;color:#0c0c0c;transform:translateY(0.38px) scale(1.4372,1.08);">1111.00</span>
<span class="t" style="left:695.5px;top:415px;font-size:2.9px;font-weight:700;color:#0c0c0c;transform:translateY(0.38px) scale(1.0323,1.08);">-</span>
<span class="t" style="left:703.4499999999999px;top:415px;font-size:2.9px;font-weight:700;color:#0c0c0c;transform:translateY(0.38px) scale(1.3728,1.08);">7353.86</span>
<span class="t" style="left:552.6px;top:431px;font-size:2.9px;font-weight:700;color:#0c0c0c;transform:translateY(0.68px) scale(1.0559,1.08);">16 JAN 2025</span>
<span class="t" style="left:580.7px;top:427px;font-size:2.9px;font-weight:700;color:#0c0c0c;transform:translateY(0.83px) scale(1.1368,1.08);">TRANSFER TO 5098330062094 -</span>
<span class="t" style="left:580.7px;top:431px;font-size:2.9px;font-weight:700;color:#0c0c0c;transform:translateY(0.68px) scale(1.0371,1.08);">UPI/DR/501628731825/Mobile/ICICI/A</span>
<span class="t" style="left:580.7px;top:435px;font-size:2.9px;font-weight:700;color:#0c0c0c;transform:translateY(0.53px) scale(1.1195,1.08);">/Make a/UPI</span>
<span class="t" style="left:667.55px;top:431px;font-size:2.9px;font-weight:700;color:#0c0c0c;transform:translateY(0.68px) scale(1.4168,1.08);">40.00</span>
<span class="t" style="left:695.5px;top:431px;font-size:2.9px;font-weight:700;color:#0c0c0c;transform:translateY(0.68px) scale(1.0323,1.08);">-</span>
<span class="t" style="left:703.4499999999999px;top:431px;font-size:2.9px;font-weight:700;color:#0c0c0c;transform:translateY(0.68px) scale(1.3728,1.08);">8464.86</span>
<span class="t" style="left:552.6px;top:447px;font-size:2.9px;font-weight:700;color:#0c0c0c;transform:translateY(0.83px) scale(1.0559,1.08);">15 JAN 2025</span>
<span class="t" style="left:580.7px;top:443px;font-size:2.9px;font-weight:700;color:#0c0c0c;transform:translateY(0.98px) scale(1.1368,1.08);">TRANSFER TO 4898617162092 -</span>
<span class="t" style="left:580.7px;top:447px;font-size:2.9px;font-weight:700;color:#0c0c0c;transform:translateY(0.83px) scale(1.0776,1.08);">UPI/DR/501528995764/BHARAT</span>
<span class="t" style="left:580.7px;top:451px;font-size:2.9px;font-weight:700;color:#0c0c0c;transform:translateY(0.68px) scale(1.1630,1.08);">/HDFC/bharatpha/UPI</span>
<span class="t" style="left:663.4499999999999px;top:447px;font-size:2.9px;font-weight:700;color:#0c0c0c;transform:translateY(0.83px) scale(1.3728,1.08);">2500.00</span>
<span class="t" style="left:695.5px;top:447px;font-size:2.9px;font-weight:700;color:#0c0c0c;transform:translateY(0.83px) scale(1.0323,1.08);">-</span>
<span class="t" style="left:703.4499999999999px;top:447px;font-size:2.9px;font-weight:700;color:#0c0c0c;transform:translateY(0.83px) scale(1.3728,1.08);">8504.86</span>
<span class="t" style="left:552.6px;top:463px;font-size:2.9px;font-weight:700;color:#0c0c0c;transform:translateY(0.88px) scale(1.0559,1.08);">15 JAN 2025</span>
<span class="t" style="left:580.7px;top:460px;font-size:2.9px;font-weight:700;color:#0c0c0c;transform:translateY(0.03px) scale(1.1368,1.08);">TRANSFER TO 4898600162091 -</span>
<span class="t" style="left:580.7px;top:463px;font-size:2.9px;font-weight:700;color:#0c0c0c;transform:translateY(0.88px) scale(1.0788,1.08);">UPI/DR/501528981858/AKSHAY</span>
<span class="t" style="left:580.7px;top:467px;font-size:2.9px;font-weight:700;color:#0c0c0c;transform:translateY(0.73px) scale(1.1483,1.08);">/UTIC/akshaypatta/None</span>
<span class="t" style="left:663.4499999999999px;top:463px;font-size:2.9px;font-weight:700;color:#0c0c0c;transform:translateY(0.88px) scale(1.3728,1.08);">1000.00</span>
<span class="t" style="left:695.5px;top:463px;font-size:2.9px;font-weight:700;color:#0c0c0c;transform:translateY(0.88px) scale(1.0323,1.08);">-</span>
<span class="t" style="left:701.4px;top:463px;font-size:2.9px;font-weight:700;color:#0c0c0c;transform:translateY(0.88px) scale(1.3774,1.08);">11004.86</span>
<svg style="position:absolute;left:5.300000000000001px;top:62.900000000000006px;" width="14" height="14" viewBox="0 0 14 14"><g transform="translate(1.7,1.6) scale(0.96,1)"><g stroke="#eee" stroke-width="0.95" fill="#eee"><path d="M5.5 1.6V9.4M1.6 5.5H9.4" fill="none"/><path d="M5.5 0.2L7.1 2.5H3.9Z M5.5 10.8L7.1 8.5H3.9Z M0.2 5.5L2.5 3.9V7.1Z M10.8 5.5L8.5 3.9V7.1Z" stroke="none"/></g></g></svg>
<svg style="position:absolute;left:17.6px;top:73.9px;" width="2.4" height="2.4" viewBox="0 0 2.4 2.4"><path d="M2.4 0V2.4H0Z" fill="#bdbdbd"/></svg>
<svg style="position:absolute;left:5.300000000000001px;top:80.5px;" width="14" height="14" viewBox="0 0 14 14"><rect x="2.8" y="3" width="9.2" height="8.2" stroke="#d6d6d6" fill="none" stroke-width="1.2" stroke-width="1.1" stroke-dasharray="2 1.2"/></svg>
<svg style="position:absolute;left:17.6px;top:91.5px;" width="2.4" height="2.4" viewBox="0 0 2.4 2.4"><path d="M2.4 0V2.4H0Z" fill="#bdbdbd"/></svg>
<svg style="position:absolute;left:5.300000000000001px;top:98.5px;" width="14" height="14" viewBox="0 0 14 14"><path d="M2.5 2.5L6.5 7L11.5 1.5L10.5 9.5L6.5 8L4 13" stroke="#d6d6d6" fill="none" stroke-width="1.2" stroke-linejoin="round"/><path d="M6.5 7.5L10 9.5L8 10.5Z" fill="#d6d6d6"/></svg>
<svg style="position:absolute;left:17.6px;top:109.5px;" width="2.4" height="2.4" viewBox="0 0 2.4 2.4"><path d="M2.4 0V2.4H0Z" fill="#bdbdbd"/></svg>
<svg style="position:absolute;left:5.300000000000001px;top:117.8px;" width="14" height="14" viewBox="0 0 14 14"><rect x="2.5" y="2" width="7" height="7" stroke="#d6d6d6" fill="none" stroke-width="1.2" stroke-width="0.9" stroke-dasharray="1.6 1"/><rect x="4.3" y="3.8" width="3.4" height="3.4" fill="#d6d6d6"/><path d="M7.5 6.5L12 10.2L9.8 10.5L10.8 12.8L9.8 13.2L8.8 11L7.5 12.3Z" fill="#d6d6d6"/></svg>
<svg style="position:absolute;left:17.6px;top:128.8px;" width="2.4" height="2.4" viewBox="0 0 2.4 2.4"><path d="M2.4 0V2.4H0Z" fill="#bdbdbd"/></svg>
<svg style="position:absolute;left:5.300000000000001px;top:134.5px;" width="14" height="14" viewBox="0 0 14 14"><path d="M4 1V10.5H13M1 4H10.5V13" stroke="#d6d6d6" fill="none" stroke-width="1.2" stroke-width="1.4"/></svg>
<svg style="position:absolute;left:17.6px;top:145.5px;" width="2.4" height="2.4" viewBox="0 0 2.4 2.4"><path d="M2.4 0V2.4H0Z" fill="#bdbdbd"/></svg>
<svg style="position:absolute;left:5.800000000000001px;top:153.0px;" width="14" height="14" viewBox="0 0 14 14"><rect x="2.8" y="2.6" width="8.8" height="9" stroke="#d6d6d6" fill="none" stroke-width="1.2" stroke-width="1.3"/><path d="M2.8 2.6L11.6 11.6M11.6 2.6L2.8 11.6" stroke="#d6d6d6" fill="none" stroke-width="1.2" stroke-width="0.8"/></svg>
<svg style="position:absolute;left:5.300000000000001px;top:171.0px;" width="14" height="14" viewBox="0 0 14 14"><path d="M2 12.2L2.6 9.8L8 4.4L9.8 6.2L4.4 11.6Z" fill="#d6d6d6"/><path d="M7.6 3L11.2 6.6" stroke="#d6d6d6" fill="none" stroke-width="1.2" stroke-width="1.6"/><path d="M9.2 4.8L11.4 2.6" stroke="#d6d6d6" fill="none" stroke-width="1.2" stroke-width="2.6" stroke-linecap="round"/></svg>
<svg style="position:absolute;left:17.6px;top:182.0px;" width="2.4" height="2.4" viewBox="0 0 2.4 2.4"><path d="M2.4 0V2.4H0Z" fill="#bdbdbd"/></svg>
<svg style="position:absolute;left:5.300000000000001px;top:189.3px;" width="14" height="14" viewBox="0 0 14 14"><g transform="rotate(-45 7 7)"><rect x="0.8" y="4.2" width="12.4" height="5.6" rx="2.6" fill="#d6d6d6"/><rect x="5" y="4.2" width="4" height="5.6" fill="#535353"/><circle cx="6.2" cy="6" r=".5" fill="#d6d6d6"/><circle cx="7.8" cy="6" r=".5" fill="#d6d6d6"/><circle cx="6.2" cy="8" r=".5" fill="#d6d6d6"/><circle cx="7.8" cy="8" r=".5" fill="#d6d6d6"/></g></svg>
<svg style="position:absolute;left:17.6px;top:200.3px;" width="2.4" height="2.4" viewBox="0 0 2.4 2.4"><path d="M2.4 0V2.4H0Z" fill="#bdbdbd"/></svg>
<svg style="position:absolute;left:5.300000000000001px;top:208.0px;" width="14" height="14" viewBox="0 0 14 14"><path d="M11.8 1.4L12.8 2.4L7 9L5.4 7.4Z" fill="#d6d6d6"/><path d="M4.8 8.2L6.2 9.6C6 11.6 4 12.8 1.6 12.4C3 11.6 3 9 4.8 8.2Z" fill="#d6d6d6"/></svg>
<svg style="position:absolute;left:17.6px;top:219.0px;" width="2.4" height="2.4" viewBox="0 0 2.4 2.4"><path d="M2.4 0V2.4H0Z" fill="#bdbdbd"/></svg>
<svg style="position:absolute;left:5.300000000000001px;top:225.5px;" width="14" height="14" viewBox="0 0 14 14"><path d="M5.2 1.5H8.8L8.2 6H12V9.2H2V6H5.8Z" fill="#d6d6d6"/><rect x="2" y="10.6" width="10" height="1.6" fill="#d6d6d6"/></svg>
<svg style="position:absolute;left:17.6px;top:236.5px;" width="2.4" height="2.4" viewBox="0 0 2.4 2.4"><path d="M2.4 0V2.4H0Z" fill="#bdbdbd"/></svg>
<svg style="position:absolute;left:5.300000000000001px;top:244.0px;" width="14" height="14" viewBox="0 0 14 14"><path d="M11.8 1.4L12.8 2.4L7.5 8.5L6 7Z" fill="#d6d6d6"/><path d="M5.4 7.8L6.8 9.2C6.6 11 5 12.2 2.8 12C4 11.2 4 8.8 5.4 7.8Z" fill="#d6d6d6"/><path d="M2 6.5A4 4 0 0 1 7.5 3" stroke="#d6d6d6" fill="none" stroke-width="1.2" stroke-width="1"/><path d="M1 4.5L2.2 7.2L4.2 5.4Z" fill="#d6d6d6"/></svg>
<svg style="position:absolute;left:17.6px;top:255.0px;" width="2.4" height="2.4" viewBox="0 0 2.4 2.4"><path d="M2.4 0V2.4H0Z" fill="#bdbdbd"/></svg>
<svg style="position:absolute;left:5.300000000000001px;top:262.0px;" width="14" height="14" viewBox="0 0 14 14"><path d="M8.2 1.8L12.4 5.4L7.4 10.6H4.4L2 8.4Z" fill="#d6d6d6"/><path d="M2 12.4H11" stroke="#d6d6d6" fill="none" stroke-width="1.2" stroke-width="1"/></svg>
<svg style="position:absolute;left:17.6px;top:273.0px;" width="2.4" height="2.4" viewBox="0 0 2.4 2.4"><path d="M2.4 0V2.4H0Z" fill="#bdbdbd"/></svg>
<svg style="position:absolute;left:7.2px;top:279.6px" width="11" height="12.4" viewBox="0 0 12 13"><defs><linearGradient id="gg" x1="0" x2="1" y1="0" y2="0"><stop offset="0" stop-color="#efefef"/><stop offset="1" stop-color="#5a5a5a"/></linearGradient></defs><rect x="0.6" y="1.2" width="10.8" height="10.4" fill="url(#gg)" stroke="#d6d6d6" stroke-width="1"/></svg>
<svg style="position:absolute;left:18.8px;top:290.2px;" width="2.4" height="2.4" viewBox="0 0 2.4 2.4"><path d="M2.4 0V2.4H0Z" fill="#bdbdbd"/></svg>
<svg style="position:absolute;left:5.300000000000001px;top:298.0px;" width="14" height="14" viewBox="0 0 14 14"><path d="M7 1.6C9 4.8 10.6 6.6 10.6 8.8A3.6 3.6 0 0 1 3.4 8.8C3.4 6.6 5 4.8 7 1.6Z" fill="#d6d6d6"/></svg>
<svg style="position:absolute;left:17.6px;top:309.0px;" width="2.4" height="2.4" viewBox="0 0 2.4 2.4"><path d="M2.4 0V2.4H0Z" fill="#bdbdbd"/></svg>
<svg style="position:absolute;left:5.300000000000001px;top:315.8px;" width="14" height="14" viewBox="0 0 14 14"><circle cx="8.4" cy="5.4" r="3.6" fill="#d6d6d6"/><path d="M5.8 8L2.2 12" stroke="#d6d6d6" fill="none" stroke-width="1.2" stroke-width="1.8" stroke-linecap="round"/></svg>
<svg style="position:absolute;left:17.6px;top:326.8px;" width="2.4" height="2.4" viewBox="0 0 2.4 2.4"><path d="M2.4 0V2.4H0Z" fill="#bdbdbd"/></svg>
<svg style="position:absolute;left:5.300000000000001px;top:334.5px;" width="14" height="14" viewBox="0 0 14 14"><path d="M2 12L3 7.2L7.6 3.2L10.8 6.4L6.8 11Z" stroke="#d6d6d6" fill="none" stroke-width="1.2" stroke-width="1.1" stroke-linejoin="round"/><path d="M2 12L5.8 8.2" stroke="#d6d6d6" fill="none" stroke-width="1.2" stroke-width="0.9"/><circle cx="6.2" cy="7.8" r="0.9" fill="#d6d6d6"/><path d="M8.4 2.4L11.6 5.6" stroke="#d6d6d6" fill="none" stroke-width="1.2" stroke-width="1.8"/></svg>
<svg style="position:absolute;left:17.6px;top:345.5px;" width="2.4" height="2.4" viewBox="0 0 2.4 2.4"><path d="M2.4 0V2.4H0Z" fill="#bdbdbd"/></svg>
<span class="t" style="left:7.6px;top:351px;font-size:13.5px;font-weight:700;color:#d6d6d6;font-family:'Liberation Serif',serif;transform:translateY(0.69px) scale(0.9983,1.0);">T</span>
<svg style="position:absolute;left:18.8px;top:363.2px;" width="2.4" height="2.4" viewBox="0 0 2.4 2.4"><path d="M2.4 0V2.4H0Z" fill="#bdbdbd"/></svg>
<svg style="position:absolute;left:5.300000000000001px;top:370.0px;" width="14" height="14" viewBox="0 0 14 14"><path d="M4 1.2L11 8.2H7.4L9 12L7.4 12.7L5.8 8.9L4 10.8Z" fill="#d6d6d6"/></svg>
<svg style="position:absolute;left:17.6px;top:381.0px;" width="2.4" height="2.4" viewBox="0 0 2.4 2.4"><path d="M2.4 0V2.4H0Z" fill="#bdbdbd"/></svg>
<svg style="position:absolute;left:5.6px;top:388.5px;" width="14" height="14" viewBox="0 0 14 14"><rect x="2.4" y="2.8" width="9.6" height="8.6" stroke="#d6d6d6"  stroke-width="1.2" stroke-width="1.1" fill="#6c6c6c"/></svg>
<svg style="position:absolute;left:17.6px;top:399.5px;" width="2.4" height="2.4" viewBox="0 0 2.4 2.4"><path d="M2.4 0V2.4H0Z" fill="#bdbdbd"/></svg>
<svg style="position:absolute;left:5.300000000000001px;top:406.5px;" width="14" height="14" viewBox="0 0 14 14"><path d="M4.2 12.4C3 10.6 2 9 1.6 7.4C2.6 6.8 3.4 7.6 4 8.6V3.4C4 2.4 5.4 2.4 5.4 3.4V2.4C5.4 1.4 6.9 1.4 6.9 2.4V3C6.9 2 8.4 2 8.4 3V4C8.4 3.2 9.8 3.2 9.8 4.2V9C9.8 10.4 9.4 11.4 8.8 12.4Z" fill="#d6d6d6"/><path d="M10.6 2.2L12.6 3.4M11 0.6L11.4 2M12.8 1.2L11.8 2.4" stroke="#d6d6d6" fill="none" stroke-width="1.2" stroke-width="0.7"/></svg>
<svg style="position:absolute;left:17.6px;top:417.5px;" width="2.4" height="2.4" viewBox="0 0 2.4 2.4"><path d="M2.4 0V2.4H0Z" fill="#bdbdbd"/></svg>
<svg style="position:absolute;left:5.800000000000001px;top:424.6px;" width="14" height="14" viewBox="0 0 14 14"><circle cx="6" cy="5.8" r="3.3" stroke="#d6d6d6" fill="none" stroke-width="1.2" stroke-width="1.3"/><path d="M8.5 8.4L11.6 11.8" stroke="#d6d6d6" fill="none" stroke-width="1.2" stroke-width="1.7" stroke-linecap="round"/></svg>
<svg style="position:absolute;left:5.5px;top:442.6px;" width="14" height="14" viewBox="0 0 14 14"><circle cx="3.4" cy="7" r="1.05" fill="#d6d6d6"/><circle cx="7" cy="7" r="1.05" fill="#d6d6d6"/><circle cx="10.6" cy="7" r="1.05" fill="#d6d6d6"/></svg>
<svg style="position:absolute;left:17.6px;top:453.6px;" width="2.4" height="2.4" viewBox="0 0 2.4 2.4"><path d="M2.4 0V2.4H0Z" fill="#bdbdbd"/></svg>
<div style="position:absolute;left:3.8px;top:463.4px;width:3.2px;height:3.4px;background:#0a0a0a;box-shadow:0 0 0 0.5px #cfcfcf;"></div>
<div style="position:absolute;left:5.6px;top:465.6px;width:3.4px;height:3.4px;background:#f4f4f4;box-shadow:0 0 0 0.5px #333;"></div>
<svg style="position:absolute;left:13.2px;top:462.6px;" width="6.4" height="6.8" viewBox="0 0 6.4 6.8"><path d="M1.6 1.8H4.8V5" stroke="#c2c2c2" stroke-width="0.8" fill="none"/><path d="M0 1.8L1.7 0.6V3Z M4.8 6.6L3.6 4.9H6Z" fill="#c2c2c2"/></svg>
<div style="position:absolute;left:9.2px;top:480.6px;width:11.4px;height:12px;background:#ffffff;box-shadow:0 0 0 0.7px #3a3a3a;"></div>
<div style="position:absolute;left:3.2px;top:474.2px;width:10.9px;height:11.5px;background:#ffffff;box-shadow:0 0 0 0.8px #3a3a3a;"></div>
<svg style="position:absolute;left:5.300000000000001px;top:498.8px;" width="14" height="14" viewBox="0 0 14 14"><rect x="1.8" y="2.4" width="10.4" height="9.2" stroke="#d6d6d6" fill="none" stroke-width="1.2" stroke-width="1"/><ellipse cx="7" cy="7" rx="3" ry="2.6" stroke="#d6d6d6" fill="none" stroke-width="1.2" stroke-width="0.8" stroke-dasharray="1.2 0.8"/></svg>
<svg style="position:absolute;left:5.300000000000001px;top:517.0px;" width="14" height="14" viewBox="0 0 14 14"><rect x="4.6" y="2.2" width="8" height="6.4" stroke="#d6d6d6" fill="none" stroke-width="1.2" stroke-width="1"/><path d="M3.4 5H1.6V11.2H9.6V9.8" stroke="#d6d6d6" fill="none" stroke-width="1.2" stroke-width="1"/></svg>
<svg style="position:absolute;left:17.6px;top:528.0px;" width="2.4" height="2.4" viewBox="0 0 2.4 2.4"><path d="M2.4 0V2.4H0Z" fill="#bdbdbd"/></svg>
<div style="position:absolute;left:859px;top:41px;width:13px;height:679px;background:#4a4a4a;"></div>
<div style="position:absolute;left:859px;top:41px;width:13px;height:8px;background:#3e3e3e;"></div>
<div style="position:absolute;left:869.2px;top:49px;width:1.6px;height:671px;background:#434343;"></div>
<div style="position:absolute;left:870.8px;top:49px;width:23.8px;height:671px;background:#535353;"></div>
<div style="position:absolute;left:870.8px;top:41px;width:23.8px;height:8px;background:#3e3e3e;"></div>
<span class="t" style="left:885.6px;top:40px;font-size:7px;font-weight:700;color:#cfcfcf;transform:translateY(0.33px) scale(1.1520,1.08);">«</span>
<div style="position:absolute;left:870.8px;top:96.5px;width:23.8px;height:1.6px;background:#3f3f3f;"></div>
<div style="position:absolute;left:870.8px;top:144.5px;width:23.8px;height:1.6px;background:#3f3f3f;"></div>
<div style="position:absolute;left:870.8px;top:173.5px;width:23.8px;height:1.6px;background:#3f3f3f;"></div>
<div style="position:absolute;left:870.8px;top:202px;width:23.8px;height:1.6px;background:#3f3f3f;"></div>
<div style="position:absolute;left:878px;top:52px;width:10px;height:1px;background:#606060;"></div>
<div style="position:absolute;left:878px;top:101px;width:10px;height:1px;background:#606060;"></div>
<div style="position:absolute;left:878px;top:149px;width:10px;height:1px;background:#606060;"></div>
<div style="position:absolute;left:878px;top:177.5px;width:10px;height:1px;background:#606060;"></div>
<svg style="position:absolute;left:876px;top:58px;" width="14" height="14" viewBox="0 0 14 14"><path d="M11.6 1.2L12.8 2.4L6.6 9.2L5 7.6Z" fill="#d6d6d6"/><path d="M4.4 8.4L5.8 9.8C5.6 11.6 3.8 12.6 1.6 12.2C2.8 11.6 2.8 9.2 4.4 8.4Z" fill="#d6d6d6"/><path d="M1 2H4.4M1 4H4.4M1 6H3.4" stroke="#d6d6d6" fill="none" stroke-width="1.2" stroke-width="0.8"/></svg>
<svg style="position:absolute;left:876px;top:77px;" width="14" height="14" viewBox="0 0 14 14"><path d="M1 4H13M1 9.6H13" stroke="#d6d6d6" fill="none" stroke-width="1.2" stroke-width="1.3"/><circle cx="4" cy="4" r="1.9" fill="#d6d6d6"/><path d="M12.6 6.6V12.6L7.6 9.6Z" fill="#d6d6d6"/></svg>
<span class="t" style="left:877.3px;top:106px;font-size:11.5px;font-weight:400;color:#d6d6d6;transform:translateY(0.41px) scale(0.9906,1.0);">A</span>
<div style="position:absolute;left:886.6px;top:106.6px;width:1px;height:11.6px;background:#d6d6d6;"></div>
<span class="t" style="left:878.8px;top:125px;font-size:12px;font-weight:700;color:#d6d6d6;transform:translateY(0.97px) scale(0.9720,1.0);">¶</span>
<span class="t" style="left:876.8px;top:152px;font-size:13px;font-weight:700;color:#d6d6d6;font-family:'Liberation Serif',serif;transform:translateY(0.79px) scale(1.2108,1.0);font-style:italic;">A</span>
<svg style="position:absolute;left:876px;top:182px;" width="14" height="14" viewBox="0 0 14 14"><path d="M7 1.2L12.4 4V10L7 12.8L1.6 10V4Z" stroke="#d6d6d6" fill="none" stroke-width="1.2" stroke-width="1.1" stroke-linejoin="round"/><path d="M1.6 4L7 6.8L12.4 4M7 6.8V12.8" stroke="#d6d6d6" fill="none" stroke-width="1.2" stroke-width="1"/><path d="M1.6 4L7 6.8V12.8L1.6 10Z" fill="#d6d6d6" opacity=".55"/></svg>
<div style="position:absolute;left:896px;top:41px;width:179px;height:8px;background:#3e3e3e;"></div>
<span class="t" style="left:1065.8px;top:40px;font-size:7px;font-weight:700;color:#cfcfcf;transform:translateY(0.83px) scale(1.1520,1.08);">»</span>
<div style="position:absolute;left:896px;top:49px;width:179px;height:20px;background:#424242;"></div>
<div style="position:absolute;left:896px;top:69px;width:179px;height:316.5px;background:#535353;"></div>
<div style="position:absolute;left:1009px;top:49px;width:41.5px;height:21px;background:#535353;"></div>
<span class="t" style="left:901px;top:55px;font-size:7.5px;font-weight:700;color:#a9a9a9;transform:translateY(0.03px) scale(0.7839,1.08);">Swatc</span>
<span class="t" style="left:924px;top:55px;font-size:7.5px;font-weight:700;color:#a9a9a9;transform:translateY(0.03px) scale(0.8676,1.08);">Gradi</span>
<span class="t" style="left:946.8px;top:55px;font-size:7.5px;font-weight:700;color:#a9a9a9;transform:translateY(0.03px) scale(0.7994,1.08);">Patter</span>
<span class="t" style="left:969px;top:55px;font-size:7.5px;font-weight:700;color:#a9a9a9;transform:translateY(0.03px) scale(0.7752,1.08);">Histor</span>
<span class="t" style="left:991.8px;top:55px;font-size:7.5px;font-weight:700;color:#a9a9a9;transform:translateY(0.03px) scale(0.7368,1.08);">Action</span>
<span class="t" style="left:1014px;top:55px;font-size:7.5px;font-weight:700;color:#f4f4f4;transform:translateY(0.03px) scale(0.8354,1.08);">Properties</span>
<svg style="position:absolute;left:1064.6px;top:55.4px;" width="7.4" height="6.4" viewBox="0 0 7.4 6.4"><path d="M0.4 0.9H7M0.4 3.2H7M0.4 5.5H7" stroke="#c4c4c4" stroke-width="1.1"/></svg>
<div style="position:absolute;left:903px;top:73.6px;width:14.2px;height:14px;background:#3a3a3a;"></div>
<svg style="position:absolute;left:906px;top:75.6px;" width="8.4" height="10.4" viewBox="0 0 8.4 10.4"><path d="M0.7 0.7H5.2L7.6 3.1V9.6H0.7Z" stroke="#e2e2e2" stroke-width="1.1" fill="none"/><path d="M5 0.7V3.3H7.6" stroke="#e2e2e2" stroke-width="0.9" fill="none"/></svg>
<span class="t" style="left:920.2px;top:78px;font-size:7.2px;font-weight:700;color:#dcdcdc;transform:translateY(0.64px) scale(0.8135,1.08);">Document</span>
<div style="position:absolute;left:896px;top:92px;width:170px;height:1px;background:#474747;"></div>
<svg style="position:absolute;left:901px;top:101px;" width="6" height="4.4" viewBox="0 0 6 4.4"><path d="M0.6 0.8L3 3.4L5.4 0.8" stroke="#a8a8a8" stroke-width="1" fill="none"/></svg>
<span class="t" style="left:910.6px;top:99px;font-size:7.6px;font-weight:700;color:#ececec;transform:translateY(0.60px) scale(0.8287,1.08);">Canvas</span>
<span class="t" style="left:928.8px;top:116px;font-size:7.2px;font-weight:700;color:#dcdcdc;transform:translateY(0.04px) scale(0.7945,1.08);">W</span>
<div style="position:absolute;left:938.8px;top:115px;width:31.4px;height:10.2px;background:#454545;"></div>
<span class="t" style="left:941.2px;top:116px;font-size:7.2px;font-weight:700;color:#f0f0f0;transform:translateY(0.04px) scale(0.8076,1.08);">2232 px</span>
<span class="t" style="left:980px;top:116px;font-size:7.2px;font-weight:700;color:#c4c4c4;transform:translateY(0.04px) scale(0.9590,1.08);">X</span>
<div style="position:absolute;left:987.6px;top:115px;width:32.6px;height:10.2px;background:#4b4b4b;"></div>
<span class="t" style="left:990px;top:116px;font-size:7.2px;font-weight:700;color:#6a6a6a;transform:translateY(0.04px) scale(0.6949,1.08);">0 px</span>
<span class="t" style="left:929.2px;top:133px;font-size:7.2px;font-weight:700;color:#dcdcdc;transform:translateY(0.54px) scale(0.9610,1.08);">H</span>
<div style="position:absolute;left:938.8px;top:132.4px;width:31.4px;height:10.2px;background:#454545;"></div>
<span class="t" style="left:941.2px;top:133px;font-size:7.2px;font-weight:700;color:#f0f0f0;transform:translateY(0.54px) scale(0.8076,1.08);">2854 px</span>
<span class="t" style="left:980px;top:133px;font-size:7.2px;font-weight:700;color:#c4c4c4;transform:translateY(0.54px) scale(0.9590,1.08);">Y</span>
<div style="position:absolute;left:987.6px;top:132.4px;width:32.6px;height:10.2px;background:#4b4b4b;"></div>
<span class="t" style="left:990px;top:133px;font-size:7.2px;font-weight:700;color:#6a6a6a;transform:translateY(0.54px) scale(0.6949,1.08);">0 px</span>
<svg style="position:absolute;left:907.2px;top:122.6px;" width="5.6" height="12" viewBox="0 0 5.6 12"><ellipse cx="2.8" cy="3" rx="1.9" ry="2.4" stroke="#cfcfcf" stroke-width="1" fill="none"/><ellipse cx="2.8" cy="9" rx="1.9" ry="2.4" stroke="#cfcfcf" stroke-width="1" fill="none"/><path d="M2.8 3.6V8.4" stroke="#cfcfcf" stroke-width="1"/></svg>
<div style="position:absolute;left:938.8px;top:151.6px;width:14.4px;height:15.6px;background:#383838;"></div>
<svg style="position:absolute;left:941.6px;top:153.6px;" width="8.8" height="11.6" viewBox="0 0 8.8 11.6"><rect x="0.6" y="0.6" width="7.6" height="10.4" stroke="#e4e4e4" stroke-width="1" fill="none"/><circle cx="4.4" cy="4.2" r="1.3" fill="#e4e4e4"/><path d="M2.2 10.4V7.6C2.2 6.2 6.6 6.2 6.6 7.6V10.4Z" fill="#e4e4e4"/></svg>
<svg style="position:absolute;left:957px;top:155.4px;" width="11.4" height="9" viewBox="0 0 11.4 9"><rect x="0.6" y="0.6" width="10.2" height="7.8" stroke="#e4e4e4" stroke-width="1" fill="none"/><circle cx="5.7" cy="3.2" r="1.2" fill="#e4e4e4"/><path d="M3.4 8V6.6C3.4 5.2 8 5.2 8 6.6V8Z" fill="#e4e4e4"/></svg>
<span class="t" style="left:938.8px;top:176px;font-size:7.2px;font-weight:700;color:#dcdcdc;transform:translateY(0.04px) scale(0.7920,1.08);">Resolution: 250 pixels/inch</span>
<span class="t" style="left:918.8px;top:193px;font-size:7.2px;font-weight:700;color:#dcdcdc;transform:translateY(0.64px) scale(0.7993,1.08);">Mode</span>
<div style="position:absolute;left:939.4px;top:192.4px;width:80.8px;height:12.6px;background:#454545;border-radius:1px;"></div>
<span class="t" style="left:943.6px;top:194px;font-size:7.2px;font-weight:700;color:#ececec;transform:translateY(0.94px) scale(0.7187,1.08);">RGB Color</span>
<svg style="position:absolute;left:1013.8px;top:197.3px;" width="4.6" height="3.4" viewBox="0 0 4.6 3.4"><path d="M0.5 0.6L2.3 2.6L4.1 0.6" stroke="#b4b4b4" stroke-width="0.9" fill="none"/></svg>
<div style="position:absolute;left:939.4px;top:209.6px;width:80.8px;height:12.8px;background:#454545;border-radius:1px;"></div>
<span class="t" style="left:943.6px;top:212px;font-size:7.2px;font-weight:700;color:#ececec;transform:translateY(0.24px) scale(0.8012,1.08);">16 Bits/Channel</span>
<svg style="position:absolute;left:1013.8px;top:214.6px;" width="4.6" height="3.4" viewBox="0 0 4.6 3.4"><path d="M0.5 0.6L2.3 2.6L4.1 0.6" stroke="#b4b4b4" stroke-width="0.9" fill="none"/></svg>
<span class="t" style="left:926.2px;top:230px;font-size:7.2px;font-weight:700;color:#dcdcdc;transform:translateY(0.04px) scale(0.6352,1.08);">Fill</span>
<div style="position:absolute;left:938.8px;top:228.8px;width:10.8px;height:11.4px;background:#4e4e4e;border:1px solid #474747;box-sizing:border-box;"></div>
<div style="position:absolute;left:953.8px;top:228.8px;width:66.4px;height:11.6px;background:#454545;border-radius:1px;"></div>
<span class="t" style="left:957.6px;top:230px;font-size:7.2px;font-weight:700;color:#ececec;transform:translateY(0.84px) scale(0.8310,1.08);">Transparent</span>
<svg style="position:absolute;left:1013.8px;top:233.20000000000002px;" width="4.6" height="3.4" viewBox="0 0 4.6 3.4"><path d="M0.5 0.6L2.3 2.6L4.1 0.6" stroke="#b4b4b4" stroke-width="0.9" fill="none"/></svg>
<div style="position:absolute;left:896px;top:247px;width:170px;height:1px;background:#474747;"></div>
<svg style="position:absolute;left:901px;top:256px;" width="6" height="4.4" viewBox="0 0 6 4.4"><path d="M0.6 0.8L3 3.4L5.4 0.8" stroke="#a8a8a8" stroke-width="1" fill="none"/></svg>
<span class="t" style="left:910.6px;top:254px;font-size:7.6px;font-weight:700;color:#ececec;transform:translateY(0.60px) scale(0.8275,1.08);">Rulers &amp; Grids</span>
<div style="position:absolute;left:903px;top:270px;width:15px;height:16.2px;background:#383838;"></div>
<svg style="position:absolute;left:905px;top:272.4px;" width="11" height="11" viewBox="0 0 11 11"><path d="M1.4 10.6V1.4H10.6" stroke="#e4e4e4" stroke-width="2.4" fill="none"/></svg>
<svg style="position:absolute;left:925.2px;top:272.4px;" width="11.4" height="11.6" viewBox="0 0 11.4 11.6"><path d="M0.6 0.6H10.8V11H0.6ZM4 0.6V11M7.4 0.6V11M0.6 4.1H10.8M0.6 7.6H10.8" stroke="#dedede" stroke-width="0.9" fill="none"/></svg>
<svg style="position:absolute;left:946px;top:272.4px;" width="11.4" height="11.6" viewBox="0 0 11.4 11.6"><rect x="0.6" y="0.6" width="10.2" height="10.4" stroke="#dedede" stroke-width="0.9" fill="#5f5f5f"/><path d="M2.5 2.5H4.5V4.5H2.5ZM6.5 2.5H8.5V4.5H6.5ZM4.5 4.5H6.5V6.5H4.5ZM2.5 6.5H4.5V8.5H2.5ZM6.5 6.5H8.5V8.5H6.5Z" fill="#8d8d8d"/></svg>
<div style="position:absolute;left:975px;top:273px;width:45.2px;height:12px;background:#454545;border-radius:1px;"></div>
<span class="t" style="left:979.2px;top:275px;font-size:7.2px;font-weight:700;color:#ececec;transform:translateY(0.24px) scale(0.7699,1.08);">Pixels</span>
<svg style="position:absolute;left:1013.8000000000001px;top:277.6px;" width="4.6" height="3.4" viewBox="0 0 4.6 3.4"><path d="M0.5 0.6L2.3 2.6L4.1 0.6" stroke="#b4b4b4" stroke-width="0.9" fill="none"/></svg>
<div style="position:absolute;left:896px;top:294.4px;width:170px;height:1px;background:#474747;"></div>
<svg style="position:absolute;left:901px;top:303px;" width="6" height="4.4" viewBox="0 0 6 4.4"><path d="M0.6 0.8L3 3.4L5.4 0.8" stroke="#a8a8a8" stroke-width="1" fill="none"/></svg>
<span class="t" style="left:910.6px;top:301px;font-size:7.6px;font-weight:700;color:#ececec;transform:translateY(0.60px) scale(0.8000,1.08);">Guides</span>
<div style="position:absolute;left:903px;top:317px;width:15px;height:16.6px;background:#383838;"></div>
<svg style="position:absolute;left:905.2px;top:319.4px;" width="10.6" height="12" viewBox="0 0 10.6 12"><path d="M3 0V12M6 0V12M0 3.6H10.6M0 8.2H10.6" stroke="#e0e0e0" stroke-width="0.9" fill="none"/></svg>
<svg style="position:absolute;left:925.4px;top:319.4px;" width="11.6" height="12" viewBox="0 0 11.6 12"><path d="M2.6 0V12M6.4 0V7M0 3.2H10M0 8H5.4" stroke="#dedede" stroke-width="0.9" fill="none"/><rect x="6.6" y="8" width="4.6" height="3.6" fill="#dedede"/><path d="M7.6 8V6.8A1.3 1.3 0 0 1 10.2 6.8V8" stroke="#dedede" stroke-width="0.8" fill="none"/></svg>
<div style="position:absolute;left:944px;top:316.8px;width:14.8px;height:16.8px;background:#383838;"></div>
<svg style="position:absolute;left:946px;top:319.2px;" width="11" height="12.6" viewBox="0 0 11 12.6"><path d="M2.6 0V12.6" stroke="#e4e4e4" stroke-width="1"/><path d="M4.4 4H9.6M4.4 4L6.4 2.2M4.4 4L6.4 5.8" stroke="#e4e4e4" stroke-width="0.9" fill="none"/><path d="M8.6 6V11.4M7 9.6H10.4" stroke="#e4e4e4" stroke-width="0.9"/><rect x="7.4" y="9" width="2.6" height="2.6" fill="#e4e4e4"/></svg>
<div style="position:absolute;left:975px;top:320px;width:45.2px;height:13.2px;background:#454545;border-radius:1px;"></div>
<svg style="position:absolute;left:1013.8000000000001px;top:325.20000000000005px;" width="4.6" height="3.4" viewBox="0 0 4.6 3.4"><path d="M0.5 0.6L2.3 2.6L4.1 0.6" stroke="#b4b4b4" stroke-width="0.9" fill="none"/></svg>
<div style="position:absolute;left:978.8px;top:325.7px;width:26.8px;height:1.9px;background:#d6d6d6;"></div>
<div style="position:absolute;left:896px;top:341.6px;width:170px;height:1px;background:#474747;"></div>
<svg style="position:absolute;left:901px;top:350.4px;" width="6" height="4.4" viewBox="0 0 6 4.4"><path d="M0.6 0.8L3 3.4L5.4 0.8" stroke="#a8a8a8" stroke-width="1" fill="none"/></svg>
<span class="t" style="left:910.6px;top:348px;font-size:7.6px;font-weight:700;color:#ececec;transform:translateY(1.00px) scale(0.8271,1.08);">Quick Actions</span>
<div style="position:absolute;left:1066px;top:94px;width:8.4px;height:274px;background:#4e4e4e;"></div>
<div style="position:absolute;left:1066.6px;top:104px;width:7.2px;height:222px;background:#686868;"></div>
<svg style="position:absolute;left:1067.6px;top:97.6px;" width="5" height="3.6" viewBox="0 0 5 3.6"><path d="M0.5 3L2.5 0.8L4.5 3" stroke="#7c7c7c" stroke-width="1" fill="none"/></svg>
<svg style="position:absolute;left:1067.6px;top:359.6px;" width="5" height="3.6" viewBox="0 0 5 3.6"><path d="M0.5 0.6L2.5 2.8L4.5 0.6" stroke="#7c7c7c" stroke-width="1" fill="none"/></svg>
<div style="position:absolute;left:896px;top:385.4px;width:179px;height:2px;background:#3e3e3e;"></div>
<div style="position:absolute;left:896px;top:386.8px;width:179px;height:19.8px;background:#424242;"></div>
<div style="position:absolute;left:896px;top:406.4px;width:179px;height:313.6px;background:#535353;"></div>
<div style="position:absolute;left:896px;top:386.8px;width:29.6px;height:20px;background:#535353;"></div>
<span class="t" style="left:901.8px;top:392px;font-size:7.6px;font-weight:700;color:#f4f4f4;transform:translateY(0.40px) scale(0.7429,1.08);">Layers</span>
<svg style="position:absolute;left:1064.6px;top:393.9px;" width="7.4" height="6.4" viewBox="0 0 7.4 6.4"><path d="M0.4 0.9H7M0.4 3.2H7M0.4 5.5H7" stroke="#c4c4c4" stroke-width="1.1"/></svg>
<div style="position:absolute;left:899px;top:413.6px;width:52.8px;height:12px;background:#454545;border-radius:1px;"></div>
<svg style="position:absolute;left:902.6px;top:416.4px;" width="7" height="7" viewBox="0 0 7 7"><circle cx="2.8" cy="2.8" r="2" stroke="#e6e6e6" stroke-width="1.1" fill="none"/><path d="M4.3 4.3L6.4 6.4" stroke="#e6e6e6" stroke-width="1.2"/></svg>
<span class="t" style="left:912px;top:416px;font-size:7.2px;font-weight:700;color:#e8e8e8;transform:translateY(0.04px) scale(0.7890,1.08);">Kind</span>
<svg style="position:absolute;left:945px;top:418.2px;" width="5.4" height="4" viewBox="0 0 5.4 4"><path d="M0.6 0.7L2.7 3L4.8 0.7" stroke="#b4b4b4" stroke-width="1" fill="none"/></svg>
<svg style="position:absolute;left:959px;top:416px;" width="9" height="8" viewBox="0 0 9 8"><rect x="0.6" y="0.6" width="7.8" height="6.8" stroke="#e0e0e0" stroke-width="1" fill="none"/><path d="M1.6 6.4L3.4 3.8L4.8 5.4L5.8 4.4L7.4 6.4Z" fill="#e0e0e0"/><circle cx="6" cy="2.6" r="0.8" fill="#e0e0e0"/></svg>
<svg style="position:absolute;left:974.6px;top:416px;" width="8.4" height="8.4" viewBox="0 0 8.4 8.4"><circle cx="4.2" cy="4.2" r="3.5" stroke="#e0e0e0" stroke-width="1" fill="none"/><path d="M4.2 0.7A3.5 3.5 0 0 0 1.7 6.7Z" fill="#e0e0e0"/><path d="M1.7 6.7L6.7 1.7A3.5 3.5 0 0 0 4.2 0.7Z" fill="#e0e0e0"/></svg>
<span class="t" style="left:990.2px;top:415px;font-size:10.5px;font-weight:700;color:#e0e0e0;font-family:'Liberation Serif',serif;transform:translateY(0.69px) scale(1.0263,1.0);">T</span>
<svg style="position:absolute;left:1004.6px;top:415.8px;" width="9" height="9" viewBox="0 0 9 9"><rect x="1.6" y="1.6" width="5.8" height="5.8" stroke="#e0e0e0" stroke-width="1" fill="none"/><rect x="0" y="0" width="2.4" height="2.4" fill="#e0e0e0"/><rect x="6.6" y="0" width="2.4" height="2.4" fill="#e0e0e0"/><rect x="0" y="6.6" width="2.4" height="2.4" fill="#e0e0e0"/><rect x="6.6" y="6.6" width="2.4" height="2.4" fill="#e0e0e0"/></svg>
<svg style="position:absolute;left:1019.6px;top:415.6px;" width="8.4" height="9.4" viewBox="0 0 8.4 9.4"><path d="M0.6 0.6H4.8L7 2.8V8.8H0.6Z" stroke="#e0e0e0" stroke-width="1" fill="none"/><rect x="3.6" y="5" width="4.2" height="3.8" fill="#e0e0e0"/><path d="M4.6 5V4A1.1 1.1 0 0 1 6.8 4V5" stroke="#e0e0e0" stroke-width="0.8" fill="none"/></svg>
<svg style="position:absolute;left:1034.4px;top:412.6px;" width="6.4" height="11" viewBox="0 0 6.4 11"><circle cx="3.2" cy="3" r="2.7" fill="#f0f0f0"/><rect x="2.4" y="5" width="1.6" height="5" fill="#bdbdbd"/></svg>
<div style="position:absolute;left:896px;top:430px;width:179px;height:1px;background:#474747;"></div>
<div style="position:absolute;left:900px;top:433.8px;width:76.8px;height:11.4px;background:#4d4d4d;border:1px solid #474747;box-sizing:border-box;"></div>
<span class="t" style="left:903.6px;top:435px;font-size:7px;font-weight:700;color:#6c6c6c;transform:translateY(0.63px) scale(0.7047,1.08);">Normal</span>
<svg style="position:absolute;left:969.6px;top:437.8px;" width="5.4" height="4" viewBox="0 0 5.4 4"><path d="M0.6 0.7L2.7 3L4.8 0.7" stroke="#686868" stroke-width="1" fill="none"/></svg>
<span class="t" style="left:982.6px;top:435px;font-size:7px;font-weight:700;color:#737373;transform:translateY(0.63px) scale(0.7996,1.08);">Opacity:</span>
<div style="position:absolute;left:1009.6px;top:434px;width:20.6px;height:11px;background:#444444;"></div>
<div style="position:absolute;left:1030.2px;top:434px;width:8.6px;height:11px;background:#4d4d4d;"></div>
<span class="t" style="left:1011.6px;top:435px;font-size:7px;font-weight:700;color:#646464;transform:translateY(0.63px) scale(0.7818,1.08);">100%</span>
<svg style="position:absolute;left:1031.6px;top:437.8px;" width="5.4" height="4" viewBox="0 0 5.4 4"><path d="M0.6 0.7L2.7 3L4.8 0.7" stroke="#606060" stroke-width="1" fill="none"/></svg>
<div style="position:absolute;left:896px;top:448px;width:179px;height:1px;background:#474747;"></div>
<span class="t" style="left:900px;top:455px;font-size:7px;font-weight:700;color:#737373;transform:translateY(0.03px) scale(0.6748,1.08);">Lock:</span>
<svg style="position:absolute;left:919.6px;top:454.6px;" width="8.6" height="8.6" viewBox="0 0 8.6 8.6"><path d="M0.5 0.5H8.1V8.1H0.5Z" stroke="#a2a2a2" stroke-width="0.6" fill="none"/><path d="M0.5 0.5H3V3H0.5ZM5.6 0.5H8.1V3H5.6ZM3 3H5.6V5.6H3ZM0.5 5.6H3V8.1H0.5ZM5.6 5.6H8.1V8.1H5.6Z" fill="#a2a2a2"/></svg>
<svg style="position:absolute;left:933.6px;top:454px;" width="9" height="10" viewBox="0 0 9 10"><path d="M7.6 0.8L8.4 1.6L4.2 6.6L3.2 5.6Z" fill="#a2a2a2"/><path d="M2.8 6.2L3.8 7.2C3.6 8.6 2.4 9.4 0.8 9.2C1.6 8.6 1.6 6.8 2.8 6.2Z" fill="#a2a2a2"/></svg>
<svg style="position:absolute;left:946.6px;top:454.2px;" width="9" height="9.6" viewBox="0 0 9 9.6"><g stroke="#a2a2a2" stroke-width="0.9" fill="#a2a2a2"><path d="M4.5 1.4V8.2M1.2 4.8H7.8" fill="none"/><path d="M4.5 0L5.7 1.6H3.3ZM4.5 9.6L5.7 8H3.3ZM0 4.8L1.5 3.7V5.9ZM9 4.8L7.5 3.7V5.9Z" stroke="none"/></g></svg>
<svg style="position:absolute;left:960.4px;top:454.6px;" width="9.4" height="8.8" viewBox="0 0 9.4 8.8"><path d="M0.6 2.6H6.4L8.6 5V8.2H0.6Z" stroke="#a2a2a2" stroke-width="0.9" fill="none"/><path d="M2 0V2.6M6.4 2.6V5H8.6" stroke="#a2a2a2" stroke-width="0.8" fill="none"/></svg>
<svg style="position:absolute;left:976px;top:455px;" width="6.6" height="8.4" viewBox="0 0 6.6 8.4"><rect x="0.2" y="3.6" width="6.2" height="4.6" rx="0.6" fill="#c8c8c8"/><path d="M1.5 3.6V2.5A1.8 1.8 0 0 1 5.1 2.5V3.6" stroke="#c8c8c8" stroke-width="1" fill="none"/></svg>
<span class="t" style="left:996.8px;top:455px;font-size:7px;font-weight:700;color:#737373;transform:translateY(0.03px) scale(0.6745,1.08);">Fill:</span>
<div style="position:absolute;left:1009.6px;top:453.4px;width:20.6px;height:11px;background:#444444;"></div>
<div style="position:absolute;left:1030.2px;top:453.4px;width:8.6px;height:11px;background:#4d4d4d;"></div>
<span class="t" style="left:1011.6px;top:455px;font-size:7px;font-weight:700;color:#646464;transform:translateY(0.03px) scale(0.7818,1.08);">100%</span>
<svg style="position:absolute;left:1031.6px;top:457.2px;" width="5.4" height="4" viewBox="0 0 5.4 4"><path d="M0.6 0.7L2.7 3L4.8 0.7" stroke="#606060" stroke-width="1" fill="none"/></svg>
<div style="position:absolute;left:896px;top:467.4px;width:179px;height:1px;background:#474747;"></div>
<div style="position:absolute;left:896px;top:486px;width:170px;height:1px;background:#4e4e4e;"></div>
<div style="position:absolute;left:896px;top:514.4px;width:170px;height:1px;background:#4e4e4e;"></div>
<div style="position:absolute;left:896px;top:543px;width:170px;height:1px;background:#4e4e4e;"></div>
<div style="position:absolute;left:896px;top:571.8px;width:170px;height:1px;background:#4e4e4e;"></div>
<div style="position:absolute;left:896px;top:600px;width:170px;height:1px;background:#4e4e4e;"></div>
<div style="position:absolute;left:896px;top:628.4px;width:170px;height:1px;background:#4e4e4e;"></div>
<div style="position:absolute;left:896px;top:657px;width:170px;height:1px;background:#4e4e4e;"></div>
<div style="position:absolute;left:896px;top:685.2px;width:170px;height:1px;background:#4e4e4e;"></div>
<div style="position:absolute;left:916px;top:468px;width:1px;height:238px;background:#4c4c4c;"></div>
<svg style="position:absolute;left:901.2px;top:475.2px;" width="9.4" height="6.2" viewBox="0 0 9.4 6.2"><path d="M0.4 3.1C2.2 0.4 7.2 0.4 9 3.1C7.2 5.8 2.2 5.8 0.4 3.1Z" fill="#b0b0b0"/><circle cx="4.7" cy="3.1" r="1.6" fill="#4c4c4c"/><circle cx="4.7" cy="3.1" r="0.7" fill="#b0b0b0"/></svg>
<svg style="position:absolute;left:926.4px;top:476px;" width="6" height="4.4" viewBox="0 0 6 4.4"><path d="M0.6 0.8L3 3.4L5.4 0.8" stroke="#a8a8a8" stroke-width="1" fill="none"/></svg>
<svg style="position:absolute;left:934.8px;top:473.6px;" width="9.6" height="8.2" viewBox="0 0 9.6 8.2"><path d="M0.4 1.4H3.6L4.6 2.6H9.2V7.8H0.4Z" fill="#d9d9d9"/><path d="M0.4 3.4H9.2" stroke="#535353" stroke-width="0.7"/></svg>
<span class="t" style="left:951.4px;top:474px;font-size:7px;font-weight:700;color:#e2e2e2;transform:translateY(0.03px) scale(0.8134,1.08);">edite text</span>
<svg style="position:absolute;left:901.2px;top:498.8px;" width="9.4" height="6.2" viewBox="0 0 9.4 6.2"><path d="M0.4 3.1C2.2 0.4 7.2 0.4 9 3.1C7.2 5.8 2.2 5.8 0.4 3.1Z" fill="#b0b0b0"/><circle cx="4.7" cy="3.1" r="1.6" fill="#4c4c4c"/><circle cx="4.7" cy="3.1" r="0.7" fill="#b0b0b0"/></svg>
<span class="t" style="left:942.4px;top:496px;font-size:14px;font-weight:400;color:#ececec;font-family:'Liberation Serif',serif;transform:translateY(0.26px) scale(1.0745,1.0);">T</span>
<span class="t" style="left:963px;top:497px;font-size:7px;font-weight:700;color:#e2e2e2;transform:translateY(0.63px) scale(0.8153,1.08);">Layer 2</span>
<svg style="position:absolute;left:901.2px;top:527.2px;" width="9.4" height="6.2" viewBox="0 0 9.4 6.2"><path d="M0.4 3.1C2.2 0.4 7.2 0.4 9 3.1C7.2 5.8 2.2 5.8 0.4 3.1Z" fill="#b0b0b0"/><circle cx="4.7" cy="3.1" r="1.6" fill="#4c4c4c"/><circle cx="4.7" cy="3.1" r="0.7" fill="#b0b0b0"/></svg>
<div style="position:absolute;left:938px;top:519.6px;width:15.2px;height:20.8px;box-sizing:border-box;border:1px solid #f4f4f4;background-color:#fff;background-image:linear-gradient(45deg,#ccc 25%,transparent 25%,transparent 75%,#ccc 75%),linear-gradient(45deg,#ccc 25%,transparent 25%,transparent 75%,#ccc 75%);background-size:5px 5px;background-position:0 0,2.5px 2.5px;"></div>
<div style="position:absolute;left:940px;top:522px;width:2px;height:3px;background:#c0392b;"></div>
<span class="t" style="left:959.2px;top:526px;font-size:7px;font-weight:700;color:#e2e2e2;transform:translateY(0.03px) scale(0.8234,1.08);">Layer 3</span>
<svg style="position:absolute;left:901.2px;top:556.0px;" width="9.4" height="6.2" viewBox="0 0 9.4 6.2"><path d="M0.4 3.1C2.2 0.4 7.2 0.4 9 3.1C7.2 5.8 2.2 5.8 0.4 3.1Z" fill="#b0b0b0"/><circle cx="4.7" cy="3.1" r="1.6" fill="#4c4c4c"/><circle cx="4.7" cy="3.1" r="0.7" fill="#b0b0b0"/></svg>
<span class="t" style="left:942.4px;top:553px;font-size:14px;font-weight:400;color:#ececec;font-family:'Liberation Serif',serif;transform:translateY(0.46px) scale(1.0745,1.0);">T</span>
<span class="t" style="left:963px;top:554px;font-size:7px;font-weight:700;color:#e2e2e2;transform:translateY(0.83px) scale(0.8687,1.08);">citta0000000...&lt;&lt;&lt;&lt;&lt;&lt;&lt;&lt;&lt;0 d</span>
<div style="position:absolute;left:901.4px;top:582px;width:8.6px;height:9.4px;background:transparent;border:1px solid #585858;box-sizing:border-box;"></div>
<span class="t" style="left:942.4px;top:581px;font-size:14px;font-weight:400;color:#ececec;font-family:'Liberation Serif',serif;transform:translateY(0.66px) scale(1.0745,1.0);">T</span>
<span class="t" style="left:963px;top:583px;font-size:7px;font-weight:700;color:#e2e2e2;transform:translateY(0.03px) scale(0.7701,1.08);">1aa</span>
<svg style="position:absolute;left:901.2px;top:612.4000000000001px;" width="9.4" height="6.2" viewBox="0 0 9.4 6.2"><path d="M0.4 3.1C2.2 0.4 7.2 0.4 9 3.1C7.2 5.8 2.2 5.8 0.4 3.1Z" fill="#b0b0b0"/><circle cx="4.7" cy="3.1" r="1.6" fill="#4c4c4c"/><circle cx="4.7" cy="3.1" r="0.7" fill="#b0b0b0"/></svg>
<span class="t" style="left:942.4px;top:609px;font-size:14px;font-weight:400;color:#ececec;font-family:'Liberation Serif',serif;transform:translateY(0.86px) scale(1.0745,1.0);">T</span>
<span class="t" style="left:963px;top:611px;font-size:7px;font-weight:700;color:#e2e2e2;transform:translateY(0.23px) scale(0.8043,1.08);">169</span>
<svg style="position:absolute;left:901.2px;top:640.8000000000001px;" width="9.4" height="6.2" viewBox="0 0 9.4 6.2"><path d="M0.4 3.1C2.2 0.4 7.2 0.4 9 3.1C7.2 5.8 2.2 5.8 0.4 3.1Z" fill="#b0b0b0"/><circle cx="4.7" cy="3.1" r="1.6" fill="#4c4c4c"/><circle cx="4.7" cy="3.1" r="0.7" fill="#b0b0b0"/></svg>
<span class="t" style="left:942.4px;top:638px;font-size:14px;font-weight:400;color:#ececec;font-family:'Liberation Serif',serif;transform:translateY(0.26px) scale(1.0745,1.0);">T</span>
<span class="t" style="left:963px;top:639px;font-size:7px;font-weight:700;color:#e2e2e2;transform:translateY(0.63px) scale(0.8020,1.08);">m</span>
<svg style="position:absolute;left:901.2px;top:669.6px;" width="9.4" height="6.2" viewBox="0 0 9.4 6.2"><path d="M0.4 3.1C2.2 0.4 7.2 0.4 9 3.1C7.2 5.8 2.2 5.8 0.4 3.1Z" fill="#b0b0b0"/><circle cx="4.7" cy="3.1" r="1.6" fill="#4c4c4c"/><circle cx="4.7" cy="3.1" r="0.7" fill="#b0b0b0"/></svg>
<span class="t" style="left:942.4px;top:667px;font-size:14px;font-weight:400;color:#ececec;font-family:'Liberation Serif',serif;transform:translateY(0.06px) scale(1.0745,1.0);">T</span>
<span class="t" style="left:963px;top:668px;font-size:7px;font-weight:700;color:#e2e2e2;transform:translateY(0.43px) scale(0.8305,1.08);">129 1 a</span>
<svg style="position:absolute;left:901.2px;top:697.4000000000001px;" width="9.4" height="6.2" viewBox="0 0 9.4 6.2"><path d="M0.4 3.1C2.2 0.4 7.2 0.4 9 3.1C7.2 5.8 2.2 5.8 0.4 3.1Z" fill="#b0b0b0"/><circle cx="4.7" cy="3.1" r="1.6" fill="#4c4c4c"/><circle cx="4.7" cy="3.1" r="0.7" fill="#b0b0b0"/></svg>
<span class="t" style="left:942.4px;top:694px;font-size:14px;font-weight:400;color:#ececec;font-family:'Liberation Serif',serif;transform:translateY(0.86px) scale(1.0745,1.0);">T</span>
<span class="t" style="left:963px;top:696px;font-size:7px;font-weight:700;color:#e2e2e2;transform:translateY(0.23px) scale(0.8275,1.08);">01.01.1990</span>
<div style="position:absolute;left:896px;top:706px;width:179px;height:14px;background:#535353;"></div>
<div style="position:absolute;left:896px;top:705.6px;width:179px;height:1px;background:#474747;"></div>
<svg style="position:absolute;left:948.6px;top:710.2px;" width="10" height="6.4" viewBox="0 0 10 6.4"><rect x="0.5" y="0.9" width="5" height="4.6" rx="2.3" stroke="#6e6e6e" stroke-width="1" fill="none"/><rect x="4.5" y="0.9" width="5" height="4.6" rx="2.3" stroke="#6e6e6e" stroke-width="1" fill="none"/></svg>
<span class="t" style="left:966.4px;top:709px;font-size:9px;font-weight:400;color:#6e6e6e;font-family:'Liberation Serif',serif;transform:translateY(0.56px) scale(1.1385,1.0);font-style:italic;">fx</span>
<svg style="position:absolute;left:981.6px;top:709.6px;" width="9.4" height="7.6" viewBox="0 0 9.4 7.6"><rect x="0.5" y="0.5" width="8.4" height="6.6" fill="#dadada"/><circle cx="4.7" cy="3.8" r="2.2" fill="#535353"/></svg>
<svg style="position:absolute;left:999.4px;top:709.2px;" width="8.8" height="8.8" viewBox="0 0 8.8 8.8"><circle cx="4.4" cy="4.4" r="3.7" stroke="#dadada" stroke-width="1" fill="none"/><path d="M1.8 7A3.7 3.7 0 0 1 7 1.8Z" fill="#dadada"/></svg>
<svg style="position:absolute;left:1016px;top:709.4px;" width="9.6" height="8" viewBox="0 0 9.6 8"><path d="M0.3 1H3.6L4.6 2.2H9.3V7.8H0.3Z" fill="#dadada"/></svg>
<svg style="position:absolute;left:1033.4px;top:709px;" width="8.4" height="9.2" viewBox="0 0 8.4 9.2"><rect x="0.6" y="0.6" width="7.2" height="8" stroke="#dadada" stroke-width="1" fill="none"/><path d="M4.2 2.6V6.6M2.2 4.6H6.2" stroke="#dadada" stroke-width="1"/></svg>
<svg style="position:absolute;left:1050.4px;top:709px;" width="7.6" height="9.4" viewBox="0 0 7.6 9.4"><path d="M0.2 1.8H7.4M2.6 1.8V0.6H5V1.8" stroke="#6e6e6e" stroke-width="0.9" fill="none"/><path d="M1 2.8H6.6L6.2 9.2H1.4Z" fill="#6e6e6e"/></svg>
<div style="position:absolute;left:1066px;top:468px;width:8.4px;height:238px;background:#4e4e4e;"></div>
<div style="position:absolute;left:1066.6px;top:489px;width:7.2px;height:66px;background:#686868;"></div>
<svg style="position:absolute;left:1067.6px;top:474.6px;" width="5" height="3.6" viewBox="0 0 5 3.6"><path d="M0.5 3L2.5 0.8L4.5 3" stroke="#7c7c7c" stroke-width="1" fill="none"/></svg>
<svg style="position:absolute;left:1067.6px;top:696.6px;" width="5" height="3.6" viewBox="0 0 5 3.6"><path d="M0.5 0.6L2.5 2.8L4.5 0.6" stroke="#7c7c7c" stroke-width="1" fill="none"/></svg>
<svg style="position:absolute;left:264.4px;top:24.8px;" width="9.6" height="10" viewBox="0 0 9.6 10"><path d="M0.5 0V10" stroke="#adadad" stroke-width="1"/><rect x="1.6" y="1.4" width="4.6" height="2.8" fill="#adadad"/><rect x="1.6" y="5.8" width="7.6" height="2.8" fill="#adadad"/></svg>
<svg style="position:absolute;left:280.8px;top:24.8px;" width="9.6" height="10" viewBox="0 0 9.6 10"><path d="M4.8 0V10" stroke="#adadad" stroke-width="1"/><rect x="2.4" y="1.4" width="4.8" height="2.8" fill="#adadad"/><rect x="0.6" y="5.8" width="8.4" height="2.8" fill="#adadad"/></svg>
<svg style="position:absolute;left:296.8px;top:24.8px;" width="9.6" height="10" viewBox="0 0 9.6 10"><path d="M9.1 0V10" stroke="#adadad" stroke-width="1"/><rect x="3.4" y="1.4" width="4.6" height="2.8" fill="#adadad"/><rect x="0.4" y="5.8" width="7.6" height="2.8" fill="#adadad"/></svg>
<svg style="position:absolute;left:318px;top:25.200000000000003px;" width="10" height="9.6" viewBox="0 0 10 9.6"><path d="M0 0.9H10M0 8.7H10" stroke="#adadad" stroke-width="0.9"/><rect x="1.6" y="3.2" width="6.8" height="3.2" fill="#adadad"/></svg>
<div style="position:absolute;left:336px;top:21px;width:1px;height:16px;background:#4b4b4b;"></div>
<svg style="position:absolute;left:345.4px;top:24.200000000000003px;" width="8" height="10.4" viewBox="0 0 8 10.4"><path d="M0 0.5H8" stroke="#adadad" stroke-width="1"/><rect x="1.2" y="1.6" width="2.4" height="8.4" fill="#adadad"/><rect x="4.8" y="1.6" width="2.4" height="5" fill="#adadad"/></svg>
<svg style="position:absolute;left:361.8px;top:24.200000000000003px;" width="8.4" height="10.4" viewBox="0 0 8.4 10.4"><path d="M0 5.2H8.4" stroke="#adadad" stroke-width="1"/><rect x="1.2" y="0.8" width="2.4" height="8.8" fill="#adadad"/><rect x="4.8" y="2.6" width="2.4" height="5.2" fill="#adadad"/></svg>
<svg style="position:absolute;left:378px;top:24.200000000000003px;" width="8.4" height="10.4" viewBox="0 0 8.4 10.4"><path d="M0 9.9H8.4" stroke="#adadad" stroke-width="1"/><rect x="1.2" y="0.4" width="2.4" height="8.4" fill="#adadad"/><rect x="4.8" y="3.8" width="2.4" height="5" fill="#adadad"/></svg>
<svg style="position:absolute;left:400.6px;top:24.0px;" width="6.6" height="11" viewBox="0 0 6.6 11"><path d="M0.6 0V11M6 0V11" stroke="#adadad" stroke-width="0.9"/><rect x="2" y="2" width="2.6" height="7" fill="#adadad"/></svg>
<div style="position:absolute;left:416.6px;top:21px;width:1px;height:16px;background:#4b4b4b;"></div>
<svg style="position:absolute;left:425.4px;top:27.9px;" width="11" height="3.6" viewBox="0 0 11 3.6"><circle cx="1.6" cy="1.8" r="1.45" fill="#efefef"/><circle cx="5.5" cy="1.8" r="1.45" fill="#efefef"/><circle cx="9.4" cy="1.8" r="1.45" fill="#efefef"/></svg>
<div style="position:absolute;left:445.6px;top:21px;width:1px;height:16px;background:#4b4b4b;"></div>
<span class="t" style="left:448px;top:25px;font-size:7.5px;font-weight:400;color:#7c7c7c;transform:translateY(0.02px) scale(0.8484,1.08);">3D Mode:</span>
<svg style="position:absolute;left:487px;top:23.4px;" width="12.4" height="10.6" viewBox="0 0 12.4 10.6"><ellipse cx="6.2" cy="5.8" rx="5.4" ry="3" stroke="#808080" stroke-width="1.1" fill="none" transform="rotate(-24 6.2 5.8)"/><circle cx="3" cy="8.6" r="1.5" fill="#808080"/><path d="M7.2 1.2L10 2.4L8.2 4.6" stroke="#808080" stroke-width="0.9" fill="none"/></svg>
<svg style="position:absolute;left:504px;top:23px;" width="11.4" height="11.4" viewBox="0 0 11.4 11.4"><circle cx="5.7" cy="5.7" r="4.9" stroke="#808080" stroke-width="1.1" fill="none"/><path d="M5.7 2.6A3 3 0 1 0 8 7.6" stroke="#808080" stroke-width="1" fill="none"/></svg>
<svg style="position:absolute;left:520px;top:23.2px;" width="10.6" height="10.6" viewBox="0 0 10.6 10.6"><path d="M5.3 0L7.4 2.6H3.2ZM5.3 10.6L7.4 8H3.2ZM0 5.3L2.6 3.2V7.4ZM10.6 5.3L8 3.2V7.4Z" fill="#808080"/><rect x="3" y="3" width="4.6" height="4.6" fill="#808080"/></svg>
<svg style="position:absolute;left:536.6px;top:23.2px;" width="11" height="10.6" viewBox="0 0 11 10.6"><path d="M5.5 0L7.2 2.4H3.8ZM5.5 10.6L7.2 8.2H3.8ZM0 5.3L2.4 3.6V7ZM11 5.3L8.6 3.6V7Z" fill="#808080"/><circle cx="5.5" cy="5.3" r="1.5" fill="#808080"/></svg>
<svg style="position:absolute;left:552px;top:24.8px;" width="14.6" height="7.6" viewBox="0 0 14.6 7.6"><rect x="0.4" y="1" width="7.4" height="5.6" rx="0.8" fill="#808080"/><path d="M8.4 3.8L13.6 0.6V7Z" stroke="#808080" stroke-width="0.8" fill="none"/></svg>
</div></body></html>
